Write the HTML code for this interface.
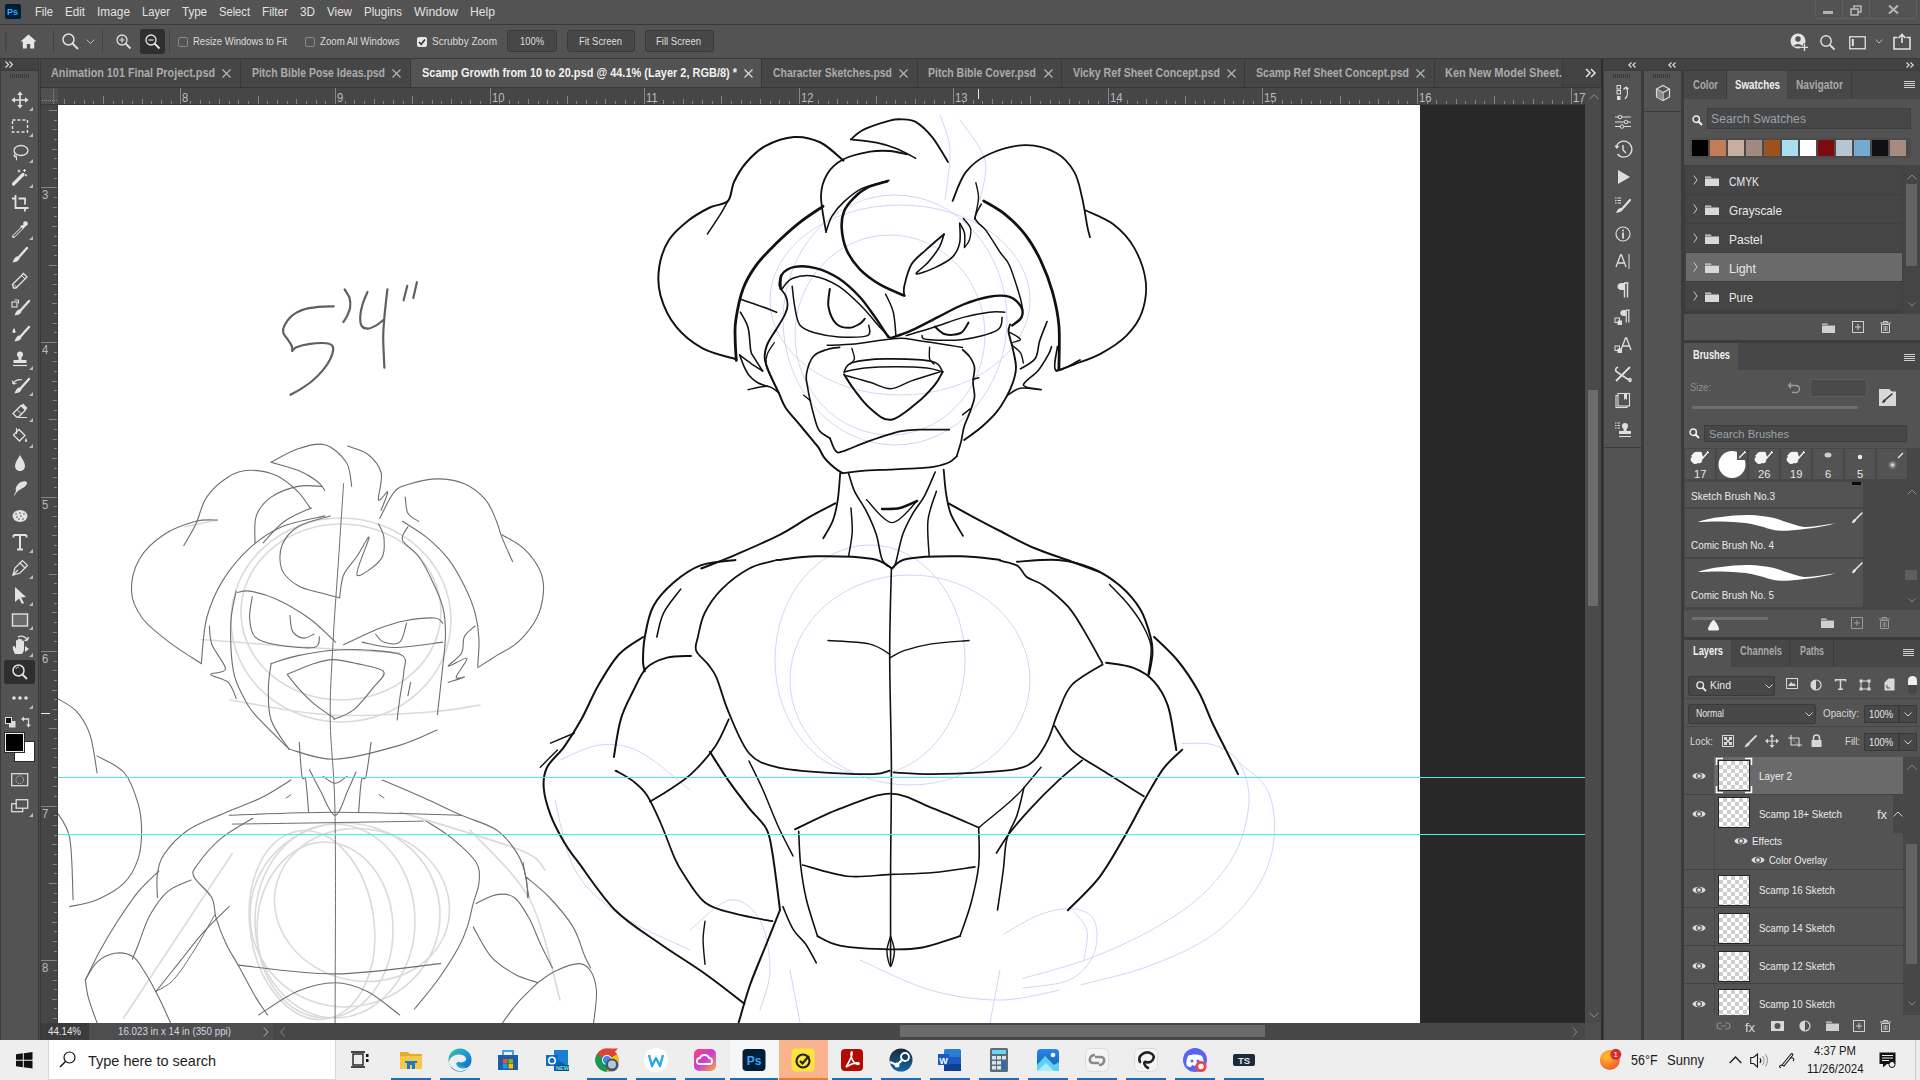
<!DOCTYPE html>
<html><head><meta charset="utf-8">
<style>
*{margin:0;padding:0;box-sizing:border-box}
html,body{width:1920px;height:1080px;overflow:hidden;background:#535353;font-family:"Liberation Sans",sans-serif;font-size:12px;color:#d6d6d6;position:relative}
.a{position:absolute}
.t{position:absolute;white-space:nowrap;line-height:1}
svg{position:absolute;overflow:visible}
</style></head><body>
<div class="a" style="left:0px;top:0px;width:1920px;height:24px;background:#535353;"></div>
<div class="a" style="left:0px;top:24px;width:1920px;height:1px;background:#3a3a3a;"></div>
<div class="a" style="left:5px;top:4px;width:16px;height:15px;background:#001e36;border-radius:2px"></div>
<div class="a" style="left:1815px;top:-4px;width:102px;height:23px;background:transparent;border:1px solid #616161;border-radius:3px"></div>
<div class="a" style="left:1842px;top:0px;width:1px;height:18px;background:#616161;"></div>
<div class="a" style="left:1869px;top:0px;width:1px;height:18px;background:#616161;"></div>
<div class="a" style="left:1823px;top:11px;width:10px;height:3px;background:#b4b4b4;"></div>
<svg style="left:1850px;top:5px" width="12" height="11"><rect x="1" y="4" width="7" height="6" fill="none" stroke="#b4b4b4" stroke-width="1.6"/><path d="M4 4V1h7v6H8" fill="none" stroke="#b4b4b4" stroke-width="1.6"/></svg>
<svg style="left:1888px;top:5px" width="11" height="9"><path d="M1 0.5L10 8.5M10 0.5L1 8.5" stroke="#b4b4b4" stroke-width="2.2"/></svg>
<div class="a" style="left:0px;top:25px;width:1920px;height:33px;background:#535353;"></div>
<div class="a" style="left:0px;top:58px;width:1920px;height:1px;background:#383838;"></div>
<div class="a" style="left:5px;top:32px;width:2px;height:19px;background:repeating-linear-gradient(#3b3b3b 0 1px,transparent 1px 2px);"></div>
<svg style="left:20px;top:34px" width="17" height="15"><path d="M8.5 0.5L0.5 7.5H2.8V14.5H6.8V10H10.2V14.5H14.2V7.5H16.5Z" fill="#e6e6e6"/></svg>
<div class="a" style="left:53px;top:30px;width:1px;height:23px;background:#434343;"></div>
<svg style="left:62px;top:33px" width="18" height="17"><circle cx="6.5" cy="6.5" r="5.5" fill="none" stroke="#e0e0e0" stroke-width="1.5"/><path d="M10.5 10.5L16 16" stroke="#e0e0e0" stroke-width="2"/></svg>
<svg style="left:86px;top:39px" width="9" height="6"><path d="M0.5 0.5L4.5 4.5L8.5 0.5" fill="none" stroke="#c0c0c0" stroke-width="1"/></svg>
<div class="a" style="left:102px;top:30px;width:1px;height:23px;background:#434343;"></div>
<svg style="left:116px;top:34px" width="16" height="16"><circle cx="6" cy="6" r="5" fill="none" stroke="#e0e0e0" stroke-width="1.3"/><path d="M3.5 6H8.5M6 3.5V8.5" stroke="#e0e0e0" stroke-width="1.2"/><path d="M9.5 9.5L14.5 14.5" stroke="#e0e0e0" stroke-width="1.8"/></svg>
<div class="a" style="left:140px;top:29px;width:25px;height:25px;background:#2f2f2f;border-radius:3px"></div>
<svg style="left:145px;top:34px" width="16" height="16"><circle cx="6" cy="6" r="5" fill="none" stroke="#e6e6e6" stroke-width="1.3"/><path d="M3.5 6H8.5" stroke="#e6e6e6" stroke-width="1.2"/><path d="M9.5 9.5L14.5 14.5" stroke="#e6e6e6" stroke-width="1.8"/></svg>
<div class="a" style="left:169px;top:30px;width:1px;height:23px;background:#434343;"></div>
<div class="a" style="left:178px;top:37px;width:10px;height:10px;background:transparent;border:1px solid #8a8a8a;border-radius:2px"></div>
<div class="a" style="left:305px;top:37px;width:10px;height:10px;background:transparent;border:1px solid #8a8a8a;border-radius:2px"></div>
<div class="a" style="left:417px;top:37px;width:10px;height:10px;background:#e6e6e6;border-radius:2px"></div>
<svg style="left:418px;top:38px" width="8" height="8"><path d="M1 4L3.2 6.3L7 1.5" fill="none" stroke="#333" stroke-width="1.6"/></svg>
<div class="a" style="left:507px;top:30px;width:50px;height:22px;background:#474747;border:1px solid #393939;border-radius:3px"></div>
<div class="a" style="left:567px;top:30px;width:68px;height:22px;background:#474747;border:1px solid #393939;border-radius:3px"></div>
<div class="a" style="left:645px;top:30px;width:69px;height:22px;background:#474747;border:1px solid #393939;border-radius:3px"></div>
<svg style="left:1790px;top:33px" width="20" height="19"><circle cx="8" cy="8" r="7.5" fill="#e2e2e2"/><circle cx="8" cy="6" r="2.7" fill="#535353"/><path d="M3.5 13.5C4.5 10 11.5 10 12.5 13.5" fill="#535353"/><path d="M14.5 10.5V18M10.8 14.3H18.2" stroke="#535353" stroke-width="3"/><path d="M14.5 11V18M11 14.3H18" stroke="#e2e2e2" stroke-width="1.3"/></svg>
<svg style="left:1820px;top:35px" width="16" height="16"><circle cx="6" cy="6" r="5.2" fill="none" stroke="#e2e2e2" stroke-width="1.4"/><path d="M9.8 9.8L14.5 14.5" stroke="#e2e2e2" stroke-width="1.8"/></svg>
<svg style="left:1849px;top:36px" width="17" height="14"><rect x="0.75" y="0.75" width="15.5" height="12" fill="none" stroke="#e2e2e2" stroke-width="1.3"/><rect x="2.8" y="3" width="2" height="7" fill="#e2e2e2"/></svg>
<svg style="left:1875px;top:39px" width="8" height="5"><path d="M0.5 0.5L4 4L7.5 0.5" fill="none" stroke="#b8b8b8" stroke-width="1"/></svg>
<svg style="left:1893px;top:33px" width="18" height="17"><path d="M4.5 4.5H1V16H17V4.5H13.5" fill="none" stroke="#e2e2e2" stroke-width="1.6"/><path d="M9 10V1.5M5.5 5L9 1.5L12.5 5" fill="none" stroke="#e2e2e2" stroke-width="1.6"/></svg>
<div class="a" style="left:0px;top:59px;width:1603px;height:29px;background:#424242;"></div>
<div class="a" style="left:41px;top:87px;width:1562px;height:1px;background:#363636;"></div>
<div class="a" style="left:41px;top:59px;width:200px;height:28px;background:#464646;"></div>
<div class="a" style="left:240px;top:59px;width:1px;height:28px;background:#393939;"></div>
<svg style="left:222px;top:69px" width="9" height="9"><path d="M0.5 0.5L8.5 8.5M8.5 0.5L0.5 8.5" stroke="#b8b8b8" stroke-width="1.1"/></svg>
<div class="a" style="left:241px;top:59px;width:170px;height:28px;background:#464646;"></div>
<div class="a" style="left:410px;top:59px;width:1px;height:28px;background:#393939;"></div>
<svg style="left:392px;top:69px" width="9" height="9"><path d="M0.5 0.5L8.5 8.5M8.5 0.5L0.5 8.5" stroke="#b8b8b8" stroke-width="1.1"/></svg>
<div class="a" style="left:411px;top:59px;width:351px;height:28px;background:#535353;"></div>
<div class="a" style="left:761px;top:59px;width:1px;height:28px;background:#393939;"></div>
<svg style="left:744px;top:69px" width="9" height="9"><path d="M0.5 0.5L8.5 8.5M8.5 0.5L0.5 8.5" stroke="#e0e0e0" stroke-width="1.1"/></svg>
<div class="a" style="left:762px;top:59px;width:156px;height:28px;background:#464646;"></div>
<div class="a" style="left:917px;top:59px;width:1px;height:28px;background:#393939;"></div>
<svg style="left:899px;top:69px" width="9" height="9"><path d="M0.5 0.5L8.5 8.5M8.5 0.5L0.5 8.5" stroke="#b8b8b8" stroke-width="1.1"/></svg>
<div class="a" style="left:918px;top:59px;width:144px;height:28px;background:#464646;"></div>
<div class="a" style="left:1061px;top:59px;width:1px;height:28px;background:#393939;"></div>
<svg style="left:1044px;top:69px" width="9" height="9"><path d="M0.5 0.5L8.5 8.5M8.5 0.5L0.5 8.5" stroke="#b8b8b8" stroke-width="1.1"/></svg>
<div class="a" style="left:1062px;top:59px;width:183px;height:28px;background:#464646;"></div>
<div class="a" style="left:1244px;top:59px;width:1px;height:28px;background:#393939;"></div>
<svg style="left:1227px;top:69px" width="9" height="9"><path d="M0.5 0.5L8.5 8.5M8.5 0.5L0.5 8.5" stroke="#b8b8b8" stroke-width="1.1"/></svg>
<div class="a" style="left:1245px;top:59px;width:190px;height:28px;background:#464646;"></div>
<div class="a" style="left:1434px;top:59px;width:1px;height:28px;background:#393939;"></div>
<svg style="left:1416px;top:69px" width="9" height="9"><path d="M0.5 0.5L8.5 8.5M8.5 0.5L0.5 8.5" stroke="#b8b8b8" stroke-width="1.1"/></svg>
<div class="a" style="left:1435px;top:59px;width:128px;height:28px;background:#464646;"></div>
<div class="a" style="left:1562px;top:59px;width:1px;height:28px;background:#393939;"></div>
<svg style="left:1585px;top:68px" width="12" height="10"><path d="M1 1L5 5L1 9M6 1L10 5L6 9" fill="none" stroke="#e6e6e6" stroke-width="1.5"/></svg>
<div class="a" style="left:0px;top:59px;width:38px;height:11px;background:#424242;"></div>
<svg style="left:5px;top:61px" width="9" height="7"><path d="M0.5 0.5L3.5 3.5L0.5 6.5M4.5 0.5L7.5 3.5L4.5 6.5" fill="none" stroke="#e0e0e0" stroke-width="1.1"/></svg>
<div class="a" style="left:0px;top:70px;width:38px;height:970px;background:#535353;"></div>
<div class="a" style="left:0px;top:59px;width:1px;height:981px;background:#3a3a3a;"></div>
<div class="a" style="left:38px;top:59px;width:1px;height:981px;background:#393939;"></div>
<div class="a" style="left:39px;top:59px;width:1px;height:981px;background:#4a4a4a;"></div>
<div class="a" style="left:40px;top:59px;width:1px;height:981px;background:#393939;"></div>
<div class="a" style="left:0px;top:70px;width:38px;height:1px;background:#3a3a3a;"></div>
<div class="a" style="left:10px;top:74px;width:19px;height:4px;background:repeating-linear-gradient(90deg,#383838 0 1px,transparent 1px 2px);"></div>
<div class="a" style="left:41px;top:88px;width:1560px;height:17px;background:#464646;"></div>
<div class="a" style="left:41px;top:105px;width:17px;height:918px;background:#464646;"></div>
<div class="a" style="left:41px;top:88px;width:17px;height:17px;background:#505050;"></div>
<div class="a" style="left:41.5px;top:100px;width:16px;height:1px;background:repeating-linear-gradient(90deg,#8a8a8a 0 1px,transparent 1px 2px);"></div>
<div class="a" style="left:53px;top:89px;width:1px;height:15px;background:repeating-linear-gradient(#8a8a8a 0 1px,transparent 1px 2px);"></div>
<div class="a" style="left:41px;top:104px;width:1560px;height:1px;background:#3a3a3a;"></div>
<div class="a" style="left:57px;top:105px;width:1px;height:918px;background:#3a3a3a;"></div>
<div class="a" style="left:64px;top:99px;width:1px;height:5px;background:#858585"></div>
<div class="a" style="left:74px;top:101px;width:1px;height:3px;background:#858585"></div>
<div class="a" style="left:84px;top:100px;width:1px;height:4px;background:#858585"></div>
<div class="a" style="left:93px;top:101px;width:1px;height:3px;background:#858585"></div>
<div class="a" style="left:103px;top:96px;width:1px;height:8px;background:#858585"></div>
<div class="a" style="left:113px;top:101px;width:1px;height:3px;background:#858585"></div>
<div class="a" style="left:122px;top:100px;width:1px;height:4px;background:#858585"></div>
<div class="a" style="left:132px;top:101px;width:1px;height:3px;background:#858585"></div>
<div class="a" style="left:142px;top:99px;width:1px;height:5px;background:#858585"></div>
<div class="a" style="left:151px;top:101px;width:1px;height:3px;background:#858585"></div>
<div class="a" style="left:161px;top:100px;width:1px;height:4px;background:#858585"></div>
<div class="a" style="left:171px;top:101px;width:1px;height:3px;background:#858585"></div>
<div class="a" style="left:180px;top:88px;width:1px;height:16px;background:#858585"></div>
<div class="a" style="left:190px;top:101px;width:1px;height:3px;background:#858585"></div>
<div class="a" style="left:200px;top:100px;width:1px;height:4px;background:#858585"></div>
<div class="a" style="left:209px;top:101px;width:1px;height:3px;background:#858585"></div>
<div class="a" style="left:219px;top:99px;width:1px;height:5px;background:#858585"></div>
<div class="a" style="left:229px;top:101px;width:1px;height:3px;background:#858585"></div>
<div class="a" style="left:238px;top:100px;width:1px;height:4px;background:#858585"></div>
<div class="a" style="left:248px;top:101px;width:1px;height:3px;background:#858585"></div>
<div class="a" style="left:258px;top:96px;width:1px;height:8px;background:#858585"></div>
<div class="a" style="left:267px;top:101px;width:1px;height:3px;background:#858585"></div>
<div class="a" style="left:277px;top:100px;width:1px;height:4px;background:#858585"></div>
<div class="a" style="left:287px;top:101px;width:1px;height:3px;background:#858585"></div>
<div class="a" style="left:296px;top:99px;width:1px;height:5px;background:#858585"></div>
<div class="a" style="left:306px;top:101px;width:1px;height:3px;background:#858585"></div>
<div class="a" style="left:316px;top:100px;width:1px;height:4px;background:#858585"></div>
<div class="a" style="left:325px;top:101px;width:1px;height:3px;background:#858585"></div>
<div class="a" style="left:335px;top:88px;width:1px;height:16px;background:#858585"></div>
<div class="a" style="left:345px;top:101px;width:1px;height:3px;background:#858585"></div>
<div class="a" style="left:354px;top:100px;width:1px;height:4px;background:#858585"></div>
<div class="a" style="left:364px;top:101px;width:1px;height:3px;background:#858585"></div>
<div class="a" style="left:374px;top:99px;width:1px;height:5px;background:#858585"></div>
<div class="a" style="left:383px;top:101px;width:1px;height:3px;background:#858585"></div>
<div class="a" style="left:393px;top:100px;width:1px;height:4px;background:#858585"></div>
<div class="a" style="left:403px;top:101px;width:1px;height:3px;background:#858585"></div>
<div class="a" style="left:412px;top:96px;width:1px;height:8px;background:#858585"></div>
<div class="a" style="left:422px;top:101px;width:1px;height:3px;background:#858585"></div>
<div class="a" style="left:432px;top:100px;width:1px;height:4px;background:#858585"></div>
<div class="a" style="left:441px;top:101px;width:1px;height:3px;background:#858585"></div>
<div class="a" style="left:451px;top:99px;width:1px;height:5px;background:#858585"></div>
<div class="a" style="left:461px;top:101px;width:1px;height:3px;background:#858585"></div>
<div class="a" style="left:470px;top:100px;width:1px;height:4px;background:#858585"></div>
<div class="a" style="left:480px;top:101px;width:1px;height:3px;background:#858585"></div>
<div class="a" style="left:490px;top:88px;width:1px;height:16px;background:#858585"></div>
<div class="a" style="left:499px;top:101px;width:1px;height:3px;background:#858585"></div>
<div class="a" style="left:509px;top:100px;width:1px;height:4px;background:#858585"></div>
<div class="a" style="left:518px;top:101px;width:1px;height:3px;background:#858585"></div>
<div class="a" style="left:528px;top:99px;width:1px;height:5px;background:#858585"></div>
<div class="a" style="left:538px;top:101px;width:1px;height:3px;background:#858585"></div>
<div class="a" style="left:547px;top:100px;width:1px;height:4px;background:#858585"></div>
<div class="a" style="left:557px;top:101px;width:1px;height:3px;background:#858585"></div>
<div class="a" style="left:567px;top:96px;width:1px;height:8px;background:#858585"></div>
<div class="a" style="left:576px;top:101px;width:1px;height:3px;background:#858585"></div>
<div class="a" style="left:586px;top:100px;width:1px;height:4px;background:#858585"></div>
<div class="a" style="left:596px;top:101px;width:1px;height:3px;background:#858585"></div>
<div class="a" style="left:605px;top:99px;width:1px;height:5px;background:#858585"></div>
<div class="a" style="left:615px;top:101px;width:1px;height:3px;background:#858585"></div>
<div class="a" style="left:625px;top:100px;width:1px;height:4px;background:#858585"></div>
<div class="a" style="left:634px;top:101px;width:1px;height:3px;background:#858585"></div>
<div class="a" style="left:644px;top:88px;width:1px;height:16px;background:#858585"></div>
<div class="a" style="left:654px;top:101px;width:1px;height:3px;background:#858585"></div>
<div class="a" style="left:663px;top:100px;width:1px;height:4px;background:#858585"></div>
<div class="a" style="left:673px;top:101px;width:1px;height:3px;background:#858585"></div>
<div class="a" style="left:683px;top:99px;width:1px;height:5px;background:#858585"></div>
<div class="a" style="left:692px;top:101px;width:1px;height:3px;background:#858585"></div>
<div class="a" style="left:702px;top:100px;width:1px;height:4px;background:#858585"></div>
<div class="a" style="left:712px;top:101px;width:1px;height:3px;background:#858585"></div>
<div class="a" style="left:721px;top:96px;width:1px;height:8px;background:#858585"></div>
<div class="a" style="left:731px;top:101px;width:1px;height:3px;background:#858585"></div>
<div class="a" style="left:741px;top:100px;width:1px;height:4px;background:#858585"></div>
<div class="a" style="left:750px;top:101px;width:1px;height:3px;background:#858585"></div>
<div class="a" style="left:760px;top:99px;width:1px;height:5px;background:#858585"></div>
<div class="a" style="left:770px;top:101px;width:1px;height:3px;background:#858585"></div>
<div class="a" style="left:779px;top:100px;width:1px;height:4px;background:#858585"></div>
<div class="a" style="left:789px;top:101px;width:1px;height:3px;background:#858585"></div>
<div class="a" style="left:799px;top:88px;width:1px;height:16px;background:#858585"></div>
<div class="a" style="left:808px;top:101px;width:1px;height:3px;background:#858585"></div>
<div class="a" style="left:818px;top:100px;width:1px;height:4px;background:#858585"></div>
<div class="a" style="left:828px;top:101px;width:1px;height:3px;background:#858585"></div>
<div class="a" style="left:837px;top:99px;width:1px;height:5px;background:#858585"></div>
<div class="a" style="left:847px;top:101px;width:1px;height:3px;background:#858585"></div>
<div class="a" style="left:857px;top:100px;width:1px;height:4px;background:#858585"></div>
<div class="a" style="left:866px;top:101px;width:1px;height:3px;background:#858585"></div>
<div class="a" style="left:876px;top:96px;width:1px;height:8px;background:#858585"></div>
<div class="a" style="left:886px;top:101px;width:1px;height:3px;background:#858585"></div>
<div class="a" style="left:895px;top:100px;width:1px;height:4px;background:#858585"></div>
<div class="a" style="left:905px;top:101px;width:1px;height:3px;background:#858585"></div>
<div class="a" style="left:915px;top:99px;width:1px;height:5px;background:#858585"></div>
<div class="a" style="left:924px;top:101px;width:1px;height:3px;background:#858585"></div>
<div class="a" style="left:934px;top:100px;width:1px;height:4px;background:#858585"></div>
<div class="a" style="left:944px;top:101px;width:1px;height:3px;background:#858585"></div>
<div class="a" style="left:953px;top:88px;width:1px;height:16px;background:#858585"></div>
<div class="a" style="left:963px;top:101px;width:1px;height:3px;background:#858585"></div>
<div class="a" style="left:973px;top:100px;width:1px;height:4px;background:#858585"></div>
<div class="a" style="left:982px;top:101px;width:1px;height:3px;background:#858585"></div>
<div class="a" style="left:992px;top:99px;width:1px;height:5px;background:#858585"></div>
<div class="a" style="left:1002px;top:101px;width:1px;height:3px;background:#858585"></div>
<div class="a" style="left:1011px;top:100px;width:1px;height:4px;background:#858585"></div>
<div class="a" style="left:1021px;top:101px;width:1px;height:3px;background:#858585"></div>
<div class="a" style="left:1030px;top:96px;width:1px;height:8px;background:#858585"></div>
<div class="a" style="left:1040px;top:101px;width:1px;height:3px;background:#858585"></div>
<div class="a" style="left:1050px;top:100px;width:1px;height:4px;background:#858585"></div>
<div class="a" style="left:1059px;top:101px;width:1px;height:3px;background:#858585"></div>
<div class="a" style="left:1069px;top:99px;width:1px;height:5px;background:#858585"></div>
<div class="a" style="left:1079px;top:101px;width:1px;height:3px;background:#858585"></div>
<div class="a" style="left:1088px;top:100px;width:1px;height:4px;background:#858585"></div>
<div class="a" style="left:1098px;top:101px;width:1px;height:3px;background:#858585"></div>
<div class="a" style="left:1108px;top:88px;width:1px;height:16px;background:#858585"></div>
<div class="a" style="left:1117px;top:101px;width:1px;height:3px;background:#858585"></div>
<div class="a" style="left:1127px;top:100px;width:1px;height:4px;background:#858585"></div>
<div class="a" style="left:1137px;top:101px;width:1px;height:3px;background:#858585"></div>
<div class="a" style="left:1146px;top:99px;width:1px;height:5px;background:#858585"></div>
<div class="a" style="left:1156px;top:101px;width:1px;height:3px;background:#858585"></div>
<div class="a" style="left:1166px;top:100px;width:1px;height:4px;background:#858585"></div>
<div class="a" style="left:1175px;top:101px;width:1px;height:3px;background:#858585"></div>
<div class="a" style="left:1185px;top:96px;width:1px;height:8px;background:#858585"></div>
<div class="a" style="left:1195px;top:101px;width:1px;height:3px;background:#858585"></div>
<div class="a" style="left:1204px;top:100px;width:1px;height:4px;background:#858585"></div>
<div class="a" style="left:1214px;top:101px;width:1px;height:3px;background:#858585"></div>
<div class="a" style="left:1224px;top:99px;width:1px;height:5px;background:#858585"></div>
<div class="a" style="left:1233px;top:101px;width:1px;height:3px;background:#858585"></div>
<div class="a" style="left:1243px;top:100px;width:1px;height:4px;background:#858585"></div>
<div class="a" style="left:1253px;top:101px;width:1px;height:3px;background:#858585"></div>
<div class="a" style="left:1262px;top:88px;width:1px;height:16px;background:#858585"></div>
<div class="a" style="left:1272px;top:101px;width:1px;height:3px;background:#858585"></div>
<div class="a" style="left:1282px;top:100px;width:1px;height:4px;background:#858585"></div>
<div class="a" style="left:1291px;top:101px;width:1px;height:3px;background:#858585"></div>
<div class="a" style="left:1301px;top:99px;width:1px;height:5px;background:#858585"></div>
<div class="a" style="left:1311px;top:101px;width:1px;height:3px;background:#858585"></div>
<div class="a" style="left:1320px;top:100px;width:1px;height:4px;background:#858585"></div>
<div class="a" style="left:1330px;top:101px;width:1px;height:3px;background:#858585"></div>
<div class="a" style="left:1340px;top:96px;width:1px;height:8px;background:#858585"></div>
<div class="a" style="left:1349px;top:101px;width:1px;height:3px;background:#858585"></div>
<div class="a" style="left:1359px;top:100px;width:1px;height:4px;background:#858585"></div>
<div class="a" style="left:1369px;top:101px;width:1px;height:3px;background:#858585"></div>
<div class="a" style="left:1378px;top:99px;width:1px;height:5px;background:#858585"></div>
<div class="a" style="left:1388px;top:101px;width:1px;height:3px;background:#858585"></div>
<div class="a" style="left:1398px;top:100px;width:1px;height:4px;background:#858585"></div>
<div class="a" style="left:1407px;top:101px;width:1px;height:3px;background:#858585"></div>
<div class="a" style="left:1417px;top:88px;width:1px;height:16px;background:#858585"></div>
<div class="a" style="left:1427px;top:101px;width:1px;height:3px;background:#858585"></div>
<div class="a" style="left:1436px;top:100px;width:1px;height:4px;background:#858585"></div>
<div class="a" style="left:1446px;top:101px;width:1px;height:3px;background:#858585"></div>
<div class="a" style="left:1456px;top:99px;width:1px;height:5px;background:#858585"></div>
<div class="a" style="left:1465px;top:101px;width:1px;height:3px;background:#858585"></div>
<div class="a" style="left:1475px;top:100px;width:1px;height:4px;background:#858585"></div>
<div class="a" style="left:1484px;top:101px;width:1px;height:3px;background:#858585"></div>
<div class="a" style="left:1494px;top:96px;width:1px;height:8px;background:#858585"></div>
<div class="a" style="left:1504px;top:101px;width:1px;height:3px;background:#858585"></div>
<div class="a" style="left:1513px;top:100px;width:1px;height:4px;background:#858585"></div>
<div class="a" style="left:1523px;top:101px;width:1px;height:3px;background:#858585"></div>
<div class="a" style="left:1533px;top:99px;width:1px;height:5px;background:#858585"></div>
<div class="a" style="left:1542px;top:101px;width:1px;height:3px;background:#858585"></div>
<div class="a" style="left:1552px;top:100px;width:1px;height:4px;background:#858585"></div>
<div class="a" style="left:1562px;top:101px;width:1px;height:3px;background:#858585"></div>
<div class="a" style="left:1571px;top:88px;width:1px;height:16px;background:#858585"></div>
<div class="a" style="left:1581px;top:101px;width:1px;height:3px;background:#858585"></div>
<div class="a" style="left:49px;top:110px;width:8px;height:1px;background:#858585"></div>
<div class="a" style="left:54px;top:120px;width:3px;height:1px;background:#858585"></div>
<div class="a" style="left:53px;top:129px;width:4px;height:1px;background:#858585"></div>
<div class="a" style="left:54px;top:139px;width:3px;height:1px;background:#858585"></div>
<div class="a" style="left:52px;top:149px;width:5px;height:1px;background:#858585"></div>
<div class="a" style="left:54px;top:158px;width:3px;height:1px;background:#858585"></div>
<div class="a" style="left:53px;top:168px;width:4px;height:1px;background:#858585"></div>
<div class="a" style="left:54px;top:178px;width:3px;height:1px;background:#858585"></div>
<div class="a" style="left:41px;top:187px;width:16px;height:1px;background:#858585"></div>
<div class="a" style="left:54px;top:197px;width:3px;height:1px;background:#858585"></div>
<div class="a" style="left:53px;top:207px;width:4px;height:1px;background:#858585"></div>
<div class="a" style="left:54px;top:216px;width:3px;height:1px;background:#858585"></div>
<div class="a" style="left:52px;top:226px;width:5px;height:1px;background:#858585"></div>
<div class="a" style="left:54px;top:236px;width:3px;height:1px;background:#858585"></div>
<div class="a" style="left:53px;top:245px;width:4px;height:1px;background:#858585"></div>
<div class="a" style="left:54px;top:255px;width:3px;height:1px;background:#858585"></div>
<div class="a" style="left:49px;top:265px;width:8px;height:1px;background:#858585"></div>
<div class="a" style="left:54px;top:274px;width:3px;height:1px;background:#858585"></div>
<div class="a" style="left:53px;top:284px;width:4px;height:1px;background:#858585"></div>
<div class="a" style="left:54px;top:294px;width:3px;height:1px;background:#858585"></div>
<div class="a" style="left:52px;top:303px;width:5px;height:1px;background:#858585"></div>
<div class="a" style="left:54px;top:313px;width:3px;height:1px;background:#858585"></div>
<div class="a" style="left:53px;top:323px;width:4px;height:1px;background:#858585"></div>
<div class="a" style="left:54px;top:332px;width:3px;height:1px;background:#858585"></div>
<div class="a" style="left:41px;top:342px;width:16px;height:1px;background:#858585"></div>
<div class="a" style="left:54px;top:352px;width:3px;height:1px;background:#858585"></div>
<div class="a" style="left:53px;top:361px;width:4px;height:1px;background:#858585"></div>
<div class="a" style="left:54px;top:371px;width:3px;height:1px;background:#858585"></div>
<div class="a" style="left:52px;top:381px;width:5px;height:1px;background:#858585"></div>
<div class="a" style="left:54px;top:390px;width:3px;height:1px;background:#858585"></div>
<div class="a" style="left:53px;top:400px;width:4px;height:1px;background:#858585"></div>
<div class="a" style="left:54px;top:410px;width:3px;height:1px;background:#858585"></div>
<div class="a" style="left:49px;top:419px;width:8px;height:1px;background:#858585"></div>
<div class="a" style="left:54px;top:429px;width:3px;height:1px;background:#858585"></div>
<div class="a" style="left:53px;top:439px;width:4px;height:1px;background:#858585"></div>
<div class="a" style="left:54px;top:448px;width:3px;height:1px;background:#858585"></div>
<div class="a" style="left:52px;top:458px;width:5px;height:1px;background:#858585"></div>
<div class="a" style="left:54px;top:468px;width:3px;height:1px;background:#858585"></div>
<div class="a" style="left:53px;top:477px;width:4px;height:1px;background:#858585"></div>
<div class="a" style="left:54px;top:487px;width:3px;height:1px;background:#858585"></div>
<div class="a" style="left:41px;top:497px;width:16px;height:1px;background:#858585"></div>
<div class="a" style="left:54px;top:506px;width:3px;height:1px;background:#858585"></div>
<div class="a" style="left:53px;top:516px;width:4px;height:1px;background:#858585"></div>
<div class="a" style="left:54px;top:526px;width:3px;height:1px;background:#858585"></div>
<div class="a" style="left:52px;top:535px;width:5px;height:1px;background:#858585"></div>
<div class="a" style="left:54px;top:545px;width:3px;height:1px;background:#858585"></div>
<div class="a" style="left:53px;top:554px;width:4px;height:1px;background:#858585"></div>
<div class="a" style="left:54px;top:564px;width:3px;height:1px;background:#858585"></div>
<div class="a" style="left:49px;top:574px;width:8px;height:1px;background:#858585"></div>
<div class="a" style="left:54px;top:583px;width:3px;height:1px;background:#858585"></div>
<div class="a" style="left:53px;top:593px;width:4px;height:1px;background:#858585"></div>
<div class="a" style="left:54px;top:603px;width:3px;height:1px;background:#858585"></div>
<div class="a" style="left:52px;top:612px;width:5px;height:1px;background:#858585"></div>
<div class="a" style="left:54px;top:622px;width:3px;height:1px;background:#858585"></div>
<div class="a" style="left:53px;top:632px;width:4px;height:1px;background:#858585"></div>
<div class="a" style="left:54px;top:641px;width:3px;height:1px;background:#858585"></div>
<div class="a" style="left:41px;top:651px;width:16px;height:1px;background:#858585"></div>
<div class="a" style="left:54px;top:661px;width:3px;height:1px;background:#858585"></div>
<div class="a" style="left:53px;top:670px;width:4px;height:1px;background:#858585"></div>
<div class="a" style="left:54px;top:680px;width:3px;height:1px;background:#858585"></div>
<div class="a" style="left:52px;top:690px;width:5px;height:1px;background:#858585"></div>
<div class="a" style="left:54px;top:699px;width:3px;height:1px;background:#858585"></div>
<div class="a" style="left:53px;top:709px;width:4px;height:1px;background:#858585"></div>
<div class="a" style="left:54px;top:719px;width:3px;height:1px;background:#858585"></div>
<div class="a" style="left:49px;top:728px;width:8px;height:1px;background:#858585"></div>
<div class="a" style="left:54px;top:738px;width:3px;height:1px;background:#858585"></div>
<div class="a" style="left:53px;top:748px;width:4px;height:1px;background:#858585"></div>
<div class="a" style="left:54px;top:757px;width:3px;height:1px;background:#858585"></div>
<div class="a" style="left:52px;top:767px;width:5px;height:1px;background:#858585"></div>
<div class="a" style="left:54px;top:777px;width:3px;height:1px;background:#858585"></div>
<div class="a" style="left:53px;top:786px;width:4px;height:1px;background:#858585"></div>
<div class="a" style="left:54px;top:796px;width:3px;height:1px;background:#858585"></div>
<div class="a" style="left:41px;top:806px;width:16px;height:1px;background:#858585"></div>
<div class="a" style="left:54px;top:815px;width:3px;height:1px;background:#858585"></div>
<div class="a" style="left:53px;top:825px;width:4px;height:1px;background:#858585"></div>
<div class="a" style="left:54px;top:835px;width:3px;height:1px;background:#858585"></div>
<div class="a" style="left:52px;top:844px;width:5px;height:1px;background:#858585"></div>
<div class="a" style="left:54px;top:854px;width:3px;height:1px;background:#858585"></div>
<div class="a" style="left:53px;top:864px;width:4px;height:1px;background:#858585"></div>
<div class="a" style="left:54px;top:873px;width:3px;height:1px;background:#858585"></div>
<div class="a" style="left:49px;top:883px;width:8px;height:1px;background:#858585"></div>
<div class="a" style="left:54px;top:893px;width:3px;height:1px;background:#858585"></div>
<div class="a" style="left:53px;top:902px;width:4px;height:1px;background:#858585"></div>
<div class="a" style="left:54px;top:912px;width:3px;height:1px;background:#858585"></div>
<div class="a" style="left:52px;top:922px;width:5px;height:1px;background:#858585"></div>
<div class="a" style="left:54px;top:931px;width:3px;height:1px;background:#858585"></div>
<div class="a" style="left:53px;top:941px;width:4px;height:1px;background:#858585"></div>
<div class="a" style="left:54px;top:951px;width:3px;height:1px;background:#858585"></div>
<div class="a" style="left:41px;top:960px;width:16px;height:1px;background:#858585"></div>
<div class="a" style="left:54px;top:970px;width:3px;height:1px;background:#858585"></div>
<div class="a" style="left:53px;top:980px;width:4px;height:1px;background:#858585"></div>
<div class="a" style="left:54px;top:989px;width:3px;height:1px;background:#858585"></div>
<div class="a" style="left:52px;top:999px;width:5px;height:1px;background:#858585"></div>
<div class="a" style="left:54px;top:1008px;width:3px;height:1px;background:#858585"></div>
<div class="a" style="left:53px;top:1018px;width:4px;height:1px;background:#858585"></div>
<div class="a" style="left:978px;top:89px;width:1px;height:10px;background:#e8e8e8;"></div>
<div class="a" style="left:41px;top:713px;width:9px;height:1px;background:#e8e8e8;"></div>
<div class="a" style="left:58px;top:105px;width:1362px;height:918px;background:#ffffff;"></div>
<div class="a" style="left:1420px;top:105px;width:165px;height:918px;background:#282828;"></div>
<div class="a" style="left:1585px;top:88px;width:16px;height:951px;background:#4a4a4a;"></div>
<svg style="left:1589px;top:94px" width="10" height="6"><path d="M0.5 5L5 0.8L9.5 5" fill="none" stroke="#8c8c8c" stroke-width="1"/></svg>
<svg style="left:1589px;top:1012px" width="10" height="6"><path d="M0.5 0.8L5 5L9.5 0.8" fill="none" stroke="#8c8c8c" stroke-width="1"/></svg>
<div class="a" style="left:1588px;top:390px;width:10px;height:216px;background:#6b6b6b;"></div>
<div class="a" style="left:41px;top:1023px;width:1560px;height:17px;background:#474747;"></div>
<div class="a" style="left:41px;top:1023px;width:48px;height:17px;background:#3c3c3c;"></div>
<div class="a" style="left:89px;top:1023px;width:184px;height:17px;background:#4e4e4e;"></div>
<svg style="left:263px;top:1027px" width="6" height="10"><path d="M0.8 0.5L4.8 5L0.8 9.5" fill="none" stroke="#b0b0b0" stroke-width="1"/></svg>
<svg style="left:280px;top:1027px" width="6" height="10"><path d="M4.8 0.5L0.8 5L4.8 9.5" fill="none" stroke="#8a8a8a" stroke-width="1"/></svg>
<div class="a" style="left:900px;top:1025px;width:365px;height:12px;background:#6b6b6b;"></div>
<svg style="left:1572px;top:1027px" width="6" height="10"><path d="M0.8 0.5L4.8 5L0.8 9.5" fill="none" stroke="#8a8a8a" stroke-width="1"/></svg>
<div class="a" style="left:1585px;top:1023px;width:16px;height:17px;background:#4e4e4e;"></div>
<div class="a" style="left:1601px;top:59px;width:2px;height:981px;background:#2e2e2e;"></div>
<svg style="left:9.5px;top:90.0px" width="20" height="20" viewBox="-10 -10 20 20"><path d="M0-7.5V7.5M-7.5 0H7.5" stroke="#e2e2e2" stroke-width="1.6"/><path d="M0-8.5L-2.8-5H2.8ZM0 8.5L-2.8 5H2.8ZM-8.5 0L-5-2.8V2.8ZM8.5 0L5-2.8V2.8Z" fill="#e2e2e2"/></svg>
<svg style="left:28.5px;top:107px" width="4" height="4"><path d="M4 0V4H0Z" fill="#bdbdbd"/></svg>
<svg style="left:9.5px;top:116.0px" width="20" height="20" viewBox="-10 -10 20 20"><rect x="-7.5" y="-6" width="15" height="12" stroke="#e2e2e2" fill="none" stroke-width="1.4" stroke-dasharray="3 2"/></svg>
<svg style="left:28.5px;top:133px" width="4" height="4"><path d="M4 0V4H0Z" fill="#bdbdbd"/></svg>
<svg style="left:9.5px;top:142.0px" width="20" height="20" viewBox="-10 -10 20 20"><ellipse cx="1" cy="-1.5" rx="7" ry="5" stroke="#e2e2e2" fill="none" stroke-width="1.3"/><path d="M-5 2C-7 4-5 6-4 4C-3 6-4 8-3 8" stroke="#e2e2e2" fill="none" stroke-width="1.2"/></svg>
<svg style="left:28.5px;top:159px" width="4" height="4"><path d="M4 0V4H0Z" fill="#bdbdbd"/></svg>
<svg style="left:9.5px;top:167.0px" width="20" height="20" viewBox="-10 -10 20 20"><path d="M-6.5 7L3-2.5" stroke="#e2e2e2" stroke-width="3.2" stroke-linecap="round"/><path d="M-1-7.5V-4.5M-2.5-6H0.5M4.5-8V-5M3-6.5H6M6-3V-0.5M4.8-1.8H7.2" stroke="#e2e2e2" stroke-width="1"/></svg>
<svg style="left:28.5px;top:184px" width="4" height="4"><path d="M4 0V4H0Z" fill="#bdbdbd"/></svg>
<svg style="left:9.5px;top:193.0px" width="20" height="20" viewBox="-10 -10 20 20"><path d="M-8-4.5H-4.5V5H5V8.5M-4.5-8V-4.5M-1.5-4.5H5V1.5M5 5H8.5" stroke="#e2e2e2" fill="none" stroke-width="1.8"/></svg>
<svg style="left:9.5px;top:219.0px" width="20" height="20" viewBox="-10 -10 20 20"><path d="M-6.5 7.5L2-1" stroke="#e2e2e2" stroke-width="3" stroke-linecap="round"/><path d="M-6 7L2-1" stroke="#535353" stroke-width="1.2" stroke-linecap="round"/><path d="M0-3L3 0L5-2L7.5-4.5L5.5-6.5L3-4Z" fill="#e2e2e2"/><circle cx="5.5" cy="-5.5" r="2.3" fill="#e2e2e2"/></svg>
<svg style="left:28.5px;top:236px" width="4" height="4"><path d="M4 0V4H0Z" fill="#bdbdbd"/></svg>
<svg style="left:9.5px;top:245.0px" width="20" height="20" viewBox="-10 -10 20 20"><path d="M-1.5 2.5L7-7" stroke="#e2e2e2" stroke-width="2.4" stroke-linecap="round"/><path d="M-2.5 1.5C-5 1.5-6 4-7.5 7.5C-4 7-1 6-0.5 3.5Z" fill="#e2e2e2"/></svg>
<svg style="left:9.5px;top:271.0px" width="20" height="20" viewBox="-10 -10 20 20"><path d="M-6.5 7L-7.5 3.5L3.5-7.5L7-4L-4 7Z" stroke="#e2e2e2" fill="none" stroke-width="1.3"/><path d="M1.5-5.5L5-2M-6 3.5L-3.5 6" stroke="#e2e2e2" fill="none" stroke-width="1"/></svg>
<svg style="left:9.5px;top:297.0px" width="20" height="20" viewBox="-10 -10 20 20"><g transform="translate(2 1)"><path d="M-1.5 2.5L7-7" stroke="#e2e2e2" stroke-width="2.4" stroke-linecap="round"/><path d="M-2.5 1.5C-5 1.5-6 4-7.5 7.5C-4 7-1 6-0.5 3.5Z" fill="#e2e2e2"/></g><rect x="-8" y="-5" width="5" height="5" stroke="#e2e2e2" fill="none" stroke-width="1.1"/><path d="M-5.5-7H-1.5V-3.5" stroke="#e2e2e2" fill="none" stroke-width="1"/></svg>
<svg style="left:9.5px;top:323.0px" width="20" height="20" viewBox="-10 -10 20 20"><g transform="translate(2 1)"><path d="M-1.5 2.5L7-7" stroke="#e2e2e2" stroke-width="2.4" stroke-linecap="round"/><path d="M-2.5 1.5C-5 1.5-6 4-7.5 7.5C-4 7-1 6-0.5 3.5Z" fill="#e2e2e2"/></g><path d="M-6-5C-8-2-8 0-6 0C-4 0-4-2-6-5Z" fill="#e2e2e2"/></svg>
<svg style="left:9.5px;top:349.0px" width="20" height="20" viewBox="-10 -10 20 20"><circle cx="0" cy="-4.5" r="3" fill="#e2e2e2"/><path d="M-1.5-2V1H-6.5V4H6.5V1H1.5V-2Z" fill="#e2e2e2"/><path d="M-7 6.5H7" stroke="#e2e2e2" stroke-width="1.2"/></svg>
<svg style="left:28.5px;top:366px" width="4" height="4"><path d="M4 0V4H0Z" fill="#bdbdbd"/></svg>
<svg style="left:9.5px;top:375.0px" width="20" height="20" viewBox="-10 -10 20 20"><g transform="translate(2 1)"><path d="M-1.5 2.5L7-7" stroke="#e2e2e2" stroke-width="2.4" stroke-linecap="round"/><path d="M-2.5 1.5C-5 1.5-6 4-7.5 7.5C-4 7-1 6-0.5 3.5Z" fill="#e2e2e2"/></g><path d="M-7-1C-5-5-1-6 2-5M-7-1L-7.5-4.5M-7-1L-3.5-1.5" stroke="#e2e2e2" fill="none" stroke-width="1.2"/></svg>
<svg style="left:28.5px;top:392px" width="4" height="4"><path d="M4 0V4H0Z" fill="#bdbdbd"/></svg>
<svg style="left:9.5px;top:401.0px" width="20" height="20" viewBox="-10 -10 20 20"><path d="M-7 2.5L1-5.5L5.5-1L-1.5 6H-3.5Z" stroke="#e2e2e2" fill="none" stroke-width="1.3"/><path d="M-3-1.5L1.5 3" stroke="#e2e2e2" fill="none"/><path d="M1-5.5L3-7.5L7.5-3L5.5-1Z" fill="#e2e2e2"/><path d="M-1 6.5H7" stroke="#e2e2e2" fill="none" stroke-width="1"/></svg>
<svg style="left:28.5px;top:418px" width="4" height="4"><path d="M4 0V4H0Z" fill="#bdbdbd"/></svg>
<svg style="left:9.5px;top:427.0px" width="20" height="20" viewBox="-10 -10 20 20"><path d="M-6.5-2L-1-7.5L5-1.5L-0.5 4Z" stroke="#e2e2e2" fill="none" stroke-width="1.3"/><path d="M-3.5-9V-3" stroke="#e2e2e2" fill="none" stroke-width="1.2"/><path d="M6 1C4.5 3.5 4.5 5 6 5C7.5 5 7.5 3.5 6 1Z" fill="#e2e2e2"/></svg>
<svg style="left:28.5px;top:444px" width="4" height="4"><path d="M4 0V4H0Z" fill="#bdbdbd"/></svg>
<svg style="left:9.5px;top:453.0px" width="20" height="20" viewBox="-10 -10 20 20"><path d="M0-8C-3-3-5 0-5 3C-5 6-2.5 8 0 8C2.5 8 5 6 5 3C5 0 3-3 0-8Z" fill="#e2e2e2"/></svg>
<svg style="left:9.5px;top:479.0px" width="20" height="20" viewBox="-10 -10 20 20"><path d="M-6 8C-4 3-1 1 1 0C5-2 7-4 7-6C7-8 4-8.5 1-7C-3-5-5-1-4 2C-5 4-6 6-6 8Z" fill="#e2e2e2"/></svg>
<svg style="left:9.5px;top:506.0px" width="20" height="20" viewBox="-10 -10 20 20"><ellipse cx="0" cy="0" rx="7.5" ry="6" fill="#e2e2e2"/><path d="M-5-2H-3M-1-3H1M3-2H5M-4 1H-2M0 0H2M-2 3H0M2 3H4" stroke="#535353" stroke-width="0.9"/></svg>
<svg style="left:9.5px;top:532.0px" width="20" height="20" viewBox="-10 -10 20 20"><path d="M-6.5-7H6.5M0-7V7.5M-3 7.5H3M-6.5-7V-4.5M6.5-7V-4.5" stroke="#e2e2e2" fill="none" stroke-width="2"/></svg>
<svg style="left:28.5px;top:549px" width="4" height="4"><path d="M4 0V4H0Z" fill="#bdbdbd"/></svg>
<svg style="left:9.5px;top:558.0px" width="20" height="20" viewBox="-10 -10 20 20"><path d="M-7 7L-5 0L0-5L5 0L0 5Z" stroke="#e2e2e2" fill="none" stroke-width="1.3"/><path d="M0-5L2.5-7.5L7.5-2.5L5 0M-7 7L-2 2" stroke="#e2e2e2" fill="none" stroke-width="1.2"/></svg>
<svg style="left:28.5px;top:575px" width="4" height="4"><path d="M4 0V4H0Z" fill="#bdbdbd"/></svg>
<svg style="left:9.5px;top:585.0px" width="20" height="20" viewBox="-10 -10 20 20"><path d="M-5-8L6 2L1 2.5L4 8L2 9L-1 3.5L-5 7Z" fill="#e2e2e2"/></svg>
<svg style="left:28.5px;top:602px" width="4" height="4"><path d="M4 0V4H0Z" fill="#bdbdbd"/></svg>
<svg style="left:9.5px;top:609.5px" width="20" height="20" viewBox="-10 -10 20 20"><rect x="-7.5" y="-6" width="15" height="12" fill="#6b6b6b" stroke="#e2e2e2" stroke-width="1.4"/></svg>
<svg style="left:28.5px;top:626px" width="4" height="4"><path d="M4 0V4H0Z" fill="#bdbdbd"/></svg>
<svg style="left:9.5px;top:636.0px" width="20" height="20" viewBox="-10 -10 20 20"><path d="M-5 8C-7 4-8 1-6.5 0C-5.5-0.5-5 1-4 2V-5C-4-6.5-2-6.5-2-5V-1V-6.5C-2-8 0-8 0-6.5V-1V-6C0-7.5 2-7.5 2-6V-0.5V-4.5C2-6 4-6 4-4.5V3C4 6 2 8 1 8Z" fill="#e2e2e2"/><path d="M-2-9C2-11 6-9 7.5-6M7.5-6L8.5-9M7.5-6L4.5-5.5" stroke="#e2e2e2" fill="none" stroke-width="1.3"/><path d="M5 0L9 3L5 6" fill="#e2e2e2"/></svg>
<svg style="left:28.5px;top:653px" width="4" height="4"><path d="M4 0V4H0Z" fill="#bdbdbd"/></svg>
<div class="a" style="left:4px;top:660px;width:31px;height:24px;background:#2e2e2e;border-radius:3px"></div>
<svg style="left:9.5px;top:662.0px" width="20" height="20" viewBox="-10 -10 20 20"><circle cx="-1.5" cy="-1.5" r="5.5" stroke="#e2e2e2" fill="none" stroke-width="1.5"/><path d="M2.5 2.5L7 7" stroke="#e2e2e2" stroke-width="2"/><path d="M-4-3C-3.5-4.5-2.5-5-1-5" stroke="#e2e2e2" fill="none" stroke-width="0.8"/></svg>
<svg style="left:9.5px;top:688.0px" width="20" height="20" viewBox="-10 -10 20 20"><circle cx="-6" cy="0" r="1.8" fill="#e2e2e2"/><circle cx="0" cy="0" r="1.8" fill="#e2e2e2"/><circle cx="6" cy="0" r="1.8" fill="#e2e2e2"/></svg>
<svg style="left:28.5px;top:705px" width="4" height="4"><path d="M4 0V4H0Z" fill="#bdbdbd"/></svg>
<svg style="left:5px;top:717px" width="11" height="11"><rect x="4" y="4" width="6.5" height="6.5" fill="#dcdcdc"/><rect x="0.5" y="0.5" width="6" height="6" fill="#111" stroke="#dcdcdc" stroke-width="1"/></svg>
<svg style="left:21px;top:716px" width="11" height="12"><path d="M1 3H7.5V10" fill="none" stroke="#dcdcdc" stroke-width="1.3"/><path d="M0 3L3 0.5V5.5ZM7.5 11.5L5 8.5H10Z" fill="#dcdcdc"/></svg>
<div class="a" style="left:14.5px;top:742px;width:19px;height:19px;background:#ffffff;outline:1px solid #2a2a2a"></div>
<div class="a" style="left:4.5px;top:732.5px;width:19px;height:19px;background:#000000;border:1.5px solid #f0f0f0;outline:1px solid #2a2a2a"></div>
<svg style="left:11px;top:773px" width="18" height="14"><rect x="0.7" y="0.7" width="16" height="12" fill="none" stroke="#dcdcdc" stroke-width="1.3"/><circle cx="8.7" cy="6.7" r="3.8" fill="none" stroke="#dcdcdc" stroke-width="1" stroke-dasharray="1 1.2"/></svg>
<svg style="left:11px;top:799px" width="18" height="14"><rect x="0.7" y="4.7" width="11" height="8" fill="none" stroke="#dcdcdc" stroke-width="1.3"/><rect x="5.2" y="0.7" width="11.5" height="8.5" fill="#535353" stroke="#dcdcdc" stroke-width="1.3"/></svg>
<svg style="left:28.5px;top:813px" width="4" height="4"><path d="M4 0V4H0Z" fill="#bdbdbd"/></svg>
<svg style="left:0;top:0" width="1920" height="1080"><defs><clipPath id="cv"><rect x="58" y="105" width="1362" height="918"/></clipPath></defs><g clip-path="url(#cv)" fill="none" stroke-linecap="round" stroke-linejoin="round">
<g stroke="#d3d5f7" stroke-width="1">
<ellipse cx="895" cy="320" rx="112" ry="125" transform="rotate(0 895 320)"/>
<ellipse cx="890" cy="335" rx="95" ry="100" transform="rotate(0 890 335)"/>
<ellipse cx="900" cy="300" rx="130" ry="95" transform="rotate(0 900 300)"/>
<ellipse cx="870" cy="660" rx="95" ry="115" transform="rotate(0 870 660)"/>
<ellipse cx="910" cy="680" rx="120" ry="105" transform="rotate(0 910 680)"/>
<path d="M1182.0 743.5C1187.3 743.8 1204.5 741.8 1214.0 745.0C1223.5 748.2 1233.2 753.2 1239.0 762.5C1244.8 771.8 1249.5 785.8 1249.0 800.6C1248.5 815.4 1244.0 835.5 1236.0 851.4C1228.0 867.3 1215.3 882.7 1201.0 895.9C1186.7 909.1 1169.0 920.2 1150.0 930.8C1131.0 941.4 1108.2 951.5 1087.0 959.4C1065.8 967.3 1033.7 975.2 1023.0 978.4"/>
<path d="M1239.0 762.5C1243.8 767.2 1262.2 778.3 1268.0 791.0C1273.8 803.7 1275.7 822.8 1274.0 838.7C1272.3 854.6 1268.0 870.4 1258.0 886.3C1248.0 902.2 1232.0 920.8 1214.0 934.0C1196.0 947.2 1172.2 957.2 1150.0 965.7C1127.8 974.2 1092.5 981.6 1081.0 984.8"/>
<path d="M1004.0 934.0C1009.8 930.8 1027.8 919.2 1039.0 915.0C1050.2 910.8 1062.0 908.1 1071.0 908.6C1080.0 909.1 1088.8 912.2 1093.0 918.0C1097.2 923.8 1097.5 935.5 1096.5 943.5C1095.5 951.5 1092.2 959.4 1087.0 965.7C1081.8 972.1 1075.7 977.9 1065.0 981.6C1054.3 985.3 1030.0 986.9 1023.0 988.0"/>
<path d="M1074.0 911.7C1076.2 914.9 1085.3 922.8 1087.0 930.8C1088.7 938.8 1084.5 954.6 1084.0 959.4"/>
<path d="M560.0 760.0C566.7 757.5 586.7 746.3 600.0 745.0C613.3 743.7 625.0 744.5 640.0 752.0C655.0 759.5 681.7 783.7 690.0 790.0"/>
<path d="M555.0 800.0C558.3 811.7 564.2 850.8 575.0 870.0C585.8 889.2 600.8 901.7 620.0 915.0C639.2 928.3 678.3 944.2 690.0 950.0"/>
<path d="M960.0 120.0C964.2 126.7 981.7 146.7 985.0 160.0C988.3 173.3 980.8 193.3 980.0 200.0"/>
<path d="M940.0 115.0C941.7 120.8 949.2 135.8 950.0 150.0C950.8 164.2 945.8 191.7 945.0 200.0"/>
<path d="M860.0 960.0C871.7 965.0 906.7 983.3 930.0 990.0C953.3 996.7 978.3 1000.0 1000.0 1000.0C1021.7 1000.0 1050.0 991.7 1060.0 990.0"/>
<path d="M790.0 970.0L800.0 1023.0"/>
<path d="M1000.0 970.0L990.0 1023.0"/>
<path d="M690.0 930.0C696.7 925.0 718.3 901.7 730.0 900.0C741.7 898.3 753.3 908.3 760.0 920.0C766.7 931.7 770.0 955.0 770.0 970.0C770.0 985.0 761.7 1003.3 760.0 1010.0"/>
</g>
<g stroke="#dadada" stroke-width="1.6">
<ellipse cx="341" cy="620" rx="110" ry="102" transform="rotate(0 341 620)"/>
<ellipse cx="341" cy="612" rx="100" ry="88" transform="rotate(0 341 612)"/>
<ellipse cx="335" cy="921" rx="80" ry="97" transform="rotate(0 335 921)"/>
<ellipse cx="345" cy="915" rx="95" ry="92" transform="rotate(0 345 915)"/>
<ellipse cx="325" cy="930" rx="68" ry="88" transform="rotate(0 325 930)"/>
<ellipse cx="362" cy="905" rx="88" ry="76" transform="rotate(12 362 905)"/>
<ellipse cx="312" cy="925" rx="62" ry="95" transform="rotate(-8 312 925)"/>
<path d="M123.6 1018.0L232.3 853.4"/>
<path d="M400.0 812.0C420.0 818.3 495.8 840.3 520.0 850.0C544.2 859.7 540.8 866.7 545.0 870.0"/>
<path d="M470.0 830.0C480.0 841.7 515.0 871.7 530.0 900.0C545.0 928.3 555.0 983.3 560.0 1000.0"/>
<path d="M201.3 639.5C217.8 640.8 266.9 644.8 300.0 647.0C333.1 649.2 383.3 651.9 400.0 652.9"/>
<path d="M185.2 526.7L217.4 520.0"/>
<path d="M230.0 700.0C246.7 702.5 296.7 713.0 330.0 715.0C363.3 717.0 405.0 713.7 430.0 712.0C455.0 710.3 471.7 706.2 480.0 705.0"/>
</g>
<g stroke="#6e6e6e" stroke-width="1.1">
<path d="M201.3 663.6C195.9 660.0 178.9 649.7 169.1 642.1C159.2 634.5 148.5 626.5 142.2 618.0C135.9 609.5 131.9 601.0 131.5 591.1C131.1 581.2 134.1 568.3 139.5 558.9C144.9 549.5 154.3 541.0 163.7 534.7C173.1 528.4 186.9 523.8 195.9 521.3C204.9 518.8 213.8 520.2 217.4 520.0"/>
<path d="M183.8 545.5C185.8 541.9 192.1 532.1 195.9 524.0C199.7 515.9 201.3 504.9 206.7 497.1C212.1 489.3 221.0 481.5 228.2 477.0C235.3 472.5 241.5 470.5 249.6 470.3C257.6 470.1 268.4 472.0 276.5 475.6C284.6 479.2 292.4 486.4 298.0 491.8C303.6 497.2 308.1 505.2 310.1 507.9"/>
<path d="M201.3 663.6C202.2 656.0 203.1 631.9 206.7 618.0C210.3 604.1 215.7 592.0 222.8 580.4C230.0 568.8 239.8 557.2 249.6 548.2C259.4 539.2 269.4 532.1 281.9 526.7C294.4 521.3 317.6 517.7 324.8 515.9"/>
<path d="M271.1 462.2C275.6 460.0 289.1 451.7 298.0 448.8C306.9 445.9 316.8 442.6 324.8 444.8C332.9 447.0 341.8 455.3 346.3 462.2C350.8 469.1 350.8 482.4 351.7 486.4"/>
<path d="M271.1 462.2C275.6 463.6 290.4 467.2 298.0 470.3C305.6 473.4 312.3 477.6 316.8 481.0C321.3 484.4 323.5 488.8 324.8 490.4"/>
<path d="M347.6 446.1C351.0 447.5 362.2 449.7 367.8 454.2C373.4 458.7 379.4 465.4 381.2 473.0C383.0 480.6 377.4 496.7 378.5 499.8C379.6 502.9 387.3 490.0 387.7 491.8C388.1 493.6 382.1 507.5 381.0 510.6"/>
<path d="M255.0 542.8C255.2 538.3 253.6 523.5 256.3 515.9C259.0 508.3 264.2 502.0 271.1 497.1C278.1 492.2 289.5 488.2 298.0 486.4C306.5 484.6 318.1 486.4 322.1 486.4"/>
<path d="M263.1 542.8C266.7 539.2 276.4 527.1 284.5 521.3C292.6 515.5 306.9 510.1 311.4 507.9"/>
<path d="M330.2 515.9C324.8 517.7 306.1 521.8 298.0 526.7C289.9 531.6 284.6 538.4 281.9 545.5C279.2 552.6 279.2 562.9 281.9 569.6C284.6 576.3 291.7 581.9 298.0 585.7C304.3 589.5 312.6 590.5 319.5 592.5C326.4 594.5 336.2 596.9 339.6 597.8"/>
<path d="M339.6 597.8C340.3 594.0 340.7 581.9 343.6 575.0C346.5 568.1 352.8 562.5 357.0 556.2C361.2 549.9 369.1 534.3 369.1 537.4C369.1 540.5 355.0 571.4 357.0 575.0C359.0 578.6 376.7 565.2 381.2 558.9C385.7 552.6 384.3 543.2 383.9 537.4C383.4 531.6 379.4 526.2 378.5 524.0"/>
<path d="M343.6 483.7C342.7 497.1 340.0 537.4 338.2 564.3C336.4 591.1 334.2 618.8 332.9 644.8C331.6 670.8 329.8 691.2 330.2 720.0C330.6 748.8 334.3 767.0 335.1 817.5C335.9 868.0 335.1 988.8 335.1 1023.0" stroke-width="1.0"/>
<path d="M237.5 592.5C239.5 592.3 243.1 590.0 249.6 591.1C256.1 592.2 266.6 594.7 276.5 599.2C286.4 603.7 298.8 610.9 308.7 618.0C318.6 625.1 331.1 638.1 335.6 642.1"/>
<path d="M252.3 596.5C251.9 600.1 249.2 611.3 249.6 618.0C250.0 624.7 250.5 632.3 255.0 636.8C259.5 641.3 266.6 643.0 276.5 644.8C286.4 646.6 306.9 648.8 314.1 647.5C321.3 646.2 318.6 638.6 319.5 636.8"/>
<path d="M289.9 615.3C290.3 618.0 290.4 627.6 292.6 631.4C294.8 635.2 299.7 637.6 303.3 638.1C306.9 638.6 312.3 634.8 314.1 634.1"/>
<path d="M343.6 644.8C349.4 642.1 368.2 632.7 378.5 628.7C388.8 624.7 395.8 622.5 405.2 620.7C414.6 618.9 428.4 617.6 434.7 618.0C441.0 618.4 441.4 622.4 442.8 623.3"/>
<path d="M362.2 642.1C367.6 643.0 381.0 647.5 394.4 647.5C407.8 647.5 434.7 643.0 442.8 642.1"/>
<path d="M375.6 634.1C377.0 635.4 379.7 640.8 383.7 642.1C387.7 643.4 396.0 645.2 399.8 642.1C403.6 639.0 405.4 626.4 406.5 623.3"/>
<path d="M271.1 663.6C275.6 662.3 287.7 657.8 298.0 655.6C308.3 653.4 320.8 651.1 332.9 650.2C344.9 649.3 358.7 649.3 370.3 650.2C381.9 651.1 396.9 652.0 402.5 655.6C408.1 659.2 404.2 664.6 403.8 671.7C403.4 678.9 400.9 690.5 399.8 698.5C398.7 706.5 397.6 716.4 397.1 720.0"/>
<path d="M287.2 674.4C291.7 672.6 306.5 666.1 314.1 663.6C321.7 661.1 325.8 659.6 332.9 659.6C340.0 659.6 348.4 661.6 356.9 663.6C365.4 665.6 381.0 667.7 383.7 671.7C386.4 675.7 377.9 681.5 373.0 687.8C368.1 694.1 360.5 704.1 354.2 709.3C347.9 714.4 338.9 717.4 335.4 718.7C331.8 720.0 336.4 719.8 332.9 717.3C329.3 714.8 319.9 708.8 314.1 703.9C308.3 699.0 302.5 692.7 298.0 687.8C293.5 682.9 289.0 676.6 287.2 674.4"/>
<path d="M271.1 663.6C270.7 667.6 268.4 678.4 268.4 687.8C268.4 697.2 267.7 709.8 271.1 720.0C274.5 730.2 285.9 744.2 288.9 749.0"/>
<path d="M209.4 626.0C209.8 629.1 209.3 637.6 212.0 644.8C214.7 652.0 225.7 664.1 225.5 669.0C225.3 673.9 210.2 672.2 210.7 674.4C211.1 676.6 223.9 678.4 228.2 682.4C232.4 686.4 234.9 695.8 236.2 698.5"/>
<path d="M236.2 591.1C235.3 596.5 231.2 609.9 230.8 623.3C230.4 636.7 231.2 659.2 233.5 671.7C235.8 684.2 240.7 691.4 244.3 698.5C247.9 705.6 247.6 706.2 255.0 714.6C262.4 723.0 283.2 743.3 288.9 749.0"/>
<path d="M379.7 518.6C382.1 514.1 389.2 497.6 394.4 491.8C399.5 486.0 403.4 485.9 410.6 483.7C417.8 481.5 428.4 478.9 437.4 478.9C446.3 478.9 456.2 480.2 464.3 483.7C472.4 487.2 480.3 493.5 485.7 499.8C491.1 506.1 493.8 515.0 496.5 521.3C499.2 527.6 499.2 530.7 501.9 537.4C504.6 544.1 510.8 557.6 512.6 561.6"/>
<path d="M501.9 534.7C505.5 537.0 517.0 542.4 523.3 548.2C529.6 554.0 536.1 562.5 539.5 569.6C542.9 576.8 544.0 583.0 543.5 591.1C543.0 599.2 541.0 609.5 536.8 618.0C532.5 626.5 524.7 635.8 518.0 642.1C511.3 648.4 503.2 651.4 496.5 655.6C489.8 659.9 480.8 665.6 477.7 667.6"/>
<path d="M405.2 497.1C405.6 499.8 405.7 509.2 407.9 513.2C410.1 517.2 416.8 519.9 418.6 521.3"/>
<path d="M402.5 521.3C406.5 524.0 419.1 531.1 426.7 537.4C434.3 543.7 441.9 550.8 448.2 558.9C454.5 567.0 459.8 576.8 464.3 585.7C468.8 594.7 472.6 603.6 475.0 612.6C477.4 621.6 478.6 630.5 479.0 639.5C479.4 648.5 477.9 661.8 477.7 666.3"/>
<path d="M407.9 526.7C407.0 528.9 400.7 535.2 402.5 540.1C404.3 545.0 413.7 549.5 418.6 556.2C423.5 562.9 428.0 571.9 432.0 580.4C436.0 588.9 440.6 598.2 442.8 607.2C445.1 616.2 445.5 624.2 445.5 634.1C445.5 644.0 444.2 652.9 442.8 666.3C441.4 679.7 438.3 706.5 437.4 714.6"/>
<path d="M475.0 626.0C473.2 627.8 466.5 632.3 464.3 636.8C462.1 641.3 464.3 648.0 461.6 652.9C458.9 657.8 447.3 665.4 448.2 666.3C449.1 667.2 465.7 656.5 467.0 658.3C468.3 660.1 456.6 673.9 456.2 677.0C455.8 680.1 465.6 676.1 464.3 677.0C463.0 677.9 450.9 681.5 448.2 682.4"/>
<path d="M410.6 682.4L407.9 695.8"/>
<path d="M299.2 742.2C299.7 747.9 300.9 770.1 302.0 776.4C303.1 782.7 304.6 774.0 305.7 780.0C306.8 786.0 308.1 806.9 308.6 812.3"/>
<path d="M371.1 742.2C370.2 747.9 367.6 770.1 366.0 776.4C364.4 782.7 362.7 774.0 361.5 780.0C360.3 786.0 359.1 806.9 358.6 812.3"/>
<path d="M309.4 769.6C311.2 773.0 315.7 782.5 320.0 790.1C324.3 797.7 330.4 815.3 335.1 815.3C339.8 815.3 344.5 797.3 348.0 790.1C351.5 782.9 354.7 775.0 356.0 772.0"/>
<path d="M323.1 776.4C325.1 777.5 331.1 783.3 335.1 783.3C339.1 783.3 345.1 777.5 347.1 776.4"/>
<path d="M288.9 749.0C296.6 750.7 316.8 759.9 335.1 759.3C353.4 758.7 381.5 750.5 398.5 745.6C415.5 740.7 430.6 732.6 437.0 730.0"/>
<path d="M291.0 780.0C286.1 782.9 272.4 792.2 261.6 797.6C250.8 803.0 238.6 806.9 226.4 812.3C214.2 817.7 198.5 823.1 188.2 830.0C177.9 836.9 169.8 846.1 164.7 853.4C159.6 860.7 158.6 866.6 157.4 874.0C156.2 881.4 157.4 893.6 157.4 897.5"/>
<path d="M382.1 780.0C389.0 782.9 410.0 791.7 423.2 797.6C436.4 803.5 449.2 809.9 461.4 815.3C473.6 820.7 487.3 823.6 496.6 830.0C505.9 836.4 512.3 845.6 517.2 853.4C522.1 861.2 524.3 869.6 526.0 877.0C527.7 884.4 527.2 894.1 527.5 897.5"/>
<path d="M229.3 815.3C246.9 814.8 296.4 812.3 335.1 812.3C373.8 812.3 440.3 814.8 461.4 815.3"/>
<path d="M232.3 824.1C249.4 823.9 303.3 823.1 335.1 822.6C366.9 822.1 408.5 821.4 423.2 821.1" stroke-width="1.0"/>
<path d="M252.8 818.2C247.4 821.6 229.8 831.0 220.5 838.8C211.2 846.6 201.4 858.8 197.0 865.2C192.6 871.6 191.7 871.6 194.1 877.0C196.5 882.4 208.0 890.6 211.7 897.5C215.4 904.4 213.6 910.3 216.1 918.1C218.6 925.9 222.7 936.7 226.4 944.5C230.1 952.3 233.2 956.3 238.1 965.1C243.0 973.9 250.9 989.1 255.8 997.4C260.7 1005.7 265.6 1012.1 267.5 1015.0"/>
<path d="M426.1 821.1C430.5 824.0 444.3 831.9 452.6 838.8C460.9 845.7 471.7 855.0 476.1 862.3C480.5 869.6 479.5 875.9 479.0 882.8C478.5 889.6 475.1 896.0 473.2 903.4C471.2 910.8 469.8 919.5 467.3 926.9C464.9 934.2 463.4 938.7 458.5 947.5C453.6 956.3 445.2 969.5 437.9 979.8C430.5 990.1 418.3 1004.2 414.4 1009.1"/>
<path d="M238.1 965.1C254.3 966.6 301.3 974.1 335.1 973.9C368.9 973.6 423.2 965.3 440.8 963.6"/>
<path d="M258.7 1015.0C265.1 1011.1 284.2 996.9 296.9 991.5C309.6 986.1 323.4 982.7 335.1 982.7C346.9 982.7 356.6 986.1 367.4 991.5C378.2 996.9 394.3 1011.1 399.7 1015.0"/>
<path d="M158.8 871.1C155.4 874.5 145.2 883.3 138.3 891.6C131.5 899.9 124.1 911.2 117.7 921.0C111.3 930.8 105.5 940.6 100.1 950.4C94.7 960.2 87.9 974.9 85.4 979.8"/>
<path d="M191.1 879.9C187.2 881.9 174.4 885.7 167.6 891.6C160.8 897.5 154.9 906.3 150.0 915.1C145.1 923.9 141.2 937.1 138.3 944.5C135.4 951.9 133.4 956.8 132.4 959.2"/>
<path d="M229.3 906.3C224.9 910.7 211.2 923.5 202.9 932.8C194.6 942.1 187.2 952.3 179.4 962.1C171.6 971.9 159.8 986.6 155.9 991.5"/>
<path d="M85.4 979.8C87.4 976.8 92.2 966.5 97.1 962.1C102.0 957.7 108.9 954.3 114.8 953.3C120.7 952.3 127.5 953.3 132.4 956.3C137.3 959.2 139.7 964.1 144.1 971.0C148.5 977.9 154.4 988.7 158.8 997.4C163.2 1006.1 168.6 1018.7 170.6 1023.0"/>
<path d="M85.4 979.8C85.9 982.7 86.3 990.2 88.3 997.4C90.2 1004.6 95.6 1018.7 97.1 1023.0"/>
<path d="M214.6 915.1C211.2 921.0 200.9 939.6 194.1 950.4C187.2 961.2 179.9 972.9 173.5 979.8C167.1 986.6 158.8 989.5 155.9 991.5" stroke-width="1.0"/>
<path d="M526.0 877.0C529.9 880.4 541.7 889.2 549.5 897.5C557.3 905.8 567.1 917.1 573.0 926.9C578.9 936.7 581.8 949.4 584.8 956.3C587.8 963.1 589.7 966.0 590.7 968.0"/>
<path d="M476.1 903.4C479.5 901.9 490.2 895.6 496.6 894.6C503.0 893.6 508.9 893.6 514.3 897.5C519.7 901.4 524.6 910.3 529.0 918.1C533.4 925.9 536.8 936.2 540.7 944.5C544.6 952.8 550.5 964.1 552.5 968.0"/>
<path d="M537.8 982.7C540.7 980.8 548.5 974.2 555.4 971.0C562.2 967.8 573.0 963.6 578.9 963.6C584.8 963.6 587.8 966.4 590.7 971.0C593.6 975.6 596.0 982.8 596.5 991.5C597.0 1000.2 594.1 1017.8 593.6 1023.0"/>
<path d="M537.8 982.7C534.4 986.1 523.1 996.6 517.2 1003.3C511.3 1010.0 504.9 1019.7 502.5 1023.0"/>
<path d="M473.2 926.9C476.1 931.8 484.0 948.5 490.8 956.3C497.6 964.1 506.5 969.5 514.3 973.9C522.1 978.3 533.9 981.2 537.8 982.7"/>
<path d="M523.1 862.3L529.0 897.5" stroke-width="1.0"/>
<path d="M291.0 794.7L286.0 798.0" stroke-width="1.0"/>
<path d="M379.2 794.7L384.0 798.0" stroke-width="1.0"/>
<path d="M56.0 697.7C59.4 700.0 70.8 705.1 76.5 711.4C82.2 717.7 86.8 725.0 90.2 735.3C93.6 745.6 95.9 766.7 97.1 773.0"/>
<path d="M97.1 755.9C101.7 758.8 117.7 765.0 124.5 773.0C131.3 781.0 135.3 794.1 138.2 803.8C141.0 813.5 141.6 822.1 141.6 831.2C141.6 840.3 141.0 850.0 138.2 858.6C135.3 867.2 131.3 875.8 124.5 882.6C117.7 889.5 106.2 895.7 97.1 899.7C88.0 903.7 74.3 905.5 69.7 906.6"/>
<path d="M56.0 810.7C58.3 815.3 66.9 823.3 69.7 838.1C72.5 852.9 72.5 889.4 73.1 899.7"/>
</g>
<g stroke="#606060" stroke-width="2.2">
<path d="M333.8 306.3C331.2 306.4 323.4 306.3 318.2 306.9C313.0 307.5 306.9 308.4 302.5 309.9C298.1 311.4 294.7 313.3 291.7 315.9C288.7 318.5 285.8 322.8 284.4 325.6C283.0 328.4 282.6 330.4 283.2 332.8C283.8 335.2 286.7 337.8 288.1 340.0C289.5 342.2 291.0 344.2 291.7 346.0C292.4 347.8 292.2 350.0 292.3 350.8"/>
<path d="M292.3 350.8C293.0 350.2 293.8 348.3 296.5 347.2C299.2 346.1 304.1 344.9 308.5 344.2C312.9 343.5 319.2 342.9 323.0 343.0C326.8 343.1 329.7 343.7 331.4 344.8C333.1 345.9 333.4 347.2 333.2 349.6C333.0 352.0 331.9 355.9 330.2 359.3C328.5 362.7 326.0 366.5 323.0 370.1C320.0 373.7 315.9 377.8 312.1 381.0C308.3 384.2 303.7 387.1 300.1 389.4C296.5 391.7 292.1 393.9 290.5 394.8"/>
<path d="M344.6 289.4C345.4 290.8 348.6 294.9 349.5 297.9C350.4 300.9 350.5 304.5 350.1 307.5C349.7 310.5 348.2 313.5 347.1 315.9C346.0 318.3 344.0 321.0 343.4 322.0"/>
<path d="M367.5 291.9C366.7 293.9 363.9 299.9 362.7 303.9C361.5 307.9 360.5 312.4 360.3 316.0C360.1 319.6 360.3 323.5 361.5 325.6C362.7 327.7 365.1 328.6 367.5 328.6C369.9 328.6 373.3 327.0 375.9 325.6C378.5 324.2 382.0 321.0 383.2 320.1"/>
<path d="M387.4 289.4C386.9 294.0 385.1 309.1 384.4 317.1C383.7 325.1 383.2 329.2 383.2 337.6C383.2 346.0 384.2 362.7 384.4 367.7"/>
<path d="M407.3 285.8L403.6 300.3"/>
<path d="M416.9 282.2L413.3 297.9"/>
</g>
<g stroke="#111111" stroke-width="1.8">
<path d="M736.3 359.2C730.7 357.4 712.6 353.7 702.6 348.3C692.6 342.9 683.1 335.5 676.1 326.7C669.1 317.9 663.3 305.4 660.5 295.4C657.7 285.4 657.9 275.7 659.3 266.5C660.7 257.3 664.1 247.6 668.9 240.0C673.7 232.4 681.3 226.1 688.1 220.7C694.9 215.3 703.2 210.8 709.8 207.5C716.4 204.2 723.9 205.2 727.9 201.0C731.9 196.8 730.9 188.5 733.9 182.2C736.9 175.9 740.7 169.0 745.9 163.0C751.1 157.0 757.2 150.4 765.2 146.1C773.2 141.8 784.9 137.6 794.1 137.0C803.3 136.4 812.3 138.6 820.5 142.5C828.7 146.4 839.6 157.6 843.4 160.6" stroke-width="2.0"/>
<path d="M727.9 201.0C726.5 203.5 722.8 210.4 719.4 215.9C716.0 221.4 709.4 231.0 707.4 234.0" stroke-width="1.5"/>
<path d="M736.3 360.4C736.1 357.0 735.3 346.7 735.2 340.0C735.1 333.3 734.5 328.5 735.8 320.0C737.1 311.5 739.6 298.0 743.0 288.9C746.4 279.8 750.6 273.0 755.9 265.6C761.2 258.2 767.6 251.9 774.8 244.8C782.0 237.7 790.9 229.5 798.9 223.1C806.9 216.7 819.0 209.1 823.0 206.3" stroke-width="2.8"/>
<path d="M826.1 232.1C825.2 226.1 820.8 205.5 821.0 195.8C821.2 186.1 823.7 179.8 827.4 173.7C831.1 167.6 835.9 163.2 843.0 159.5C850.1 155.8 862.4 153.1 870.2 151.7C878.0 150.3 883.7 150.6 889.7 151.0C895.8 151.4 903.7 153.8 906.5 154.3" stroke-width="1.8"/>
<path d="M850.8 139.4C852.9 137.8 857.2 132.7 863.7 129.6C870.2 126.5 883.4 122.3 889.7 120.6C896.0 118.9 897.0 119.1 901.3 119.3C905.6 119.5 910.4 118.9 915.6 121.9C920.8 124.9 927.0 130.7 932.4 137.4C937.8 144.1 945.4 157.9 948.0 162.0" stroke-width="1.8"/>
<path d="M850.8 139.4C855.1 139.9 869.1 141.1 876.7 142.6C884.3 144.1 889.7 146.0 896.2 148.6C902.7 151.2 912.4 156.6 915.6 158.2" stroke-width="1.6"/>
<path d="M880.0 182.8L889.1 180.2" stroke-width="1.4"/>
<path d="M952.6 200.9C954.8 196.2 959.6 180.2 965.6 172.4C971.6 164.6 979.0 158.8 988.9 154.3C998.8 149.8 1014.0 145.4 1025.2 145.2C1036.4 145.0 1048.1 148.5 1056.3 153.0C1064.5 157.5 1070.2 164.8 1074.5 172.4C1078.8 180.0 1080.0 189.2 1082.2 198.3C1084.4 207.4 1086.1 220.4 1087.4 226.9C1088.7 233.4 1089.6 235.5 1090.0 237.2" stroke-width="1.8"/>
<path d="M1084.8 210.0C1089.5 212.4 1105.1 218.0 1113.3 224.3C1121.5 230.6 1128.7 238.1 1134.1 247.6C1139.5 257.1 1144.4 270.5 1145.7 281.3C1147.0 292.1 1145.1 303.3 1141.9 312.4C1138.7 321.5 1133.2 328.9 1126.3 335.8C1119.4 342.7 1109.0 349.1 1100.4 353.9C1091.8 358.6 1081.8 361.5 1074.5 364.3C1067.2 367.1 1059.3 369.7 1056.3 370.8" stroke-width="1.8"/>
<path d="M983.7 200.9C987.2 203.1 997.6 208.3 1004.5 213.9C1011.4 219.5 1019.2 226.8 1025.2 234.6C1031.2 242.4 1036.2 251.1 1040.7 260.6C1045.2 270.1 1049.4 280.9 1052.4 291.7C1055.4 302.5 1057.8 312.4 1058.9 325.4C1060.0 338.4 1058.9 362.1 1058.9 369.5" stroke-width="2.8"/>
<path d="M975.9 182.8C976.3 185.4 978.7 192.2 978.5 198.3C978.3 204.4 975.2 215.6 974.6 219.1" stroke-width="1.4"/>
<path d="M780.6 288.9C780.8 286.5 779.5 278.3 781.9 274.6C784.3 270.9 789.2 268.0 794.8 266.9C800.4 265.8 808.2 266.2 815.6 268.1C823.0 270.0 831.6 273.7 838.9 278.5C846.2 283.3 853.5 290.2 859.6 296.7C865.7 303.2 870.4 310.7 875.2 317.4C880.0 324.1 886.0 333.6 888.2 336.9" stroke-width="2.4"/>
<path d="M781.9 288.9C783.6 287.2 787.0 280.7 792.2 278.5C797.4 276.3 805.2 274.6 813.0 275.9C820.8 277.2 830.7 281.1 838.9 286.3C847.1 291.5 855.3 300.1 862.2 307.0C869.1 313.9 875.6 322.6 880.4 327.8C885.1 333.0 889.0 336.5 890.7 338.2" stroke-width="1.5"/>
<path d="M792.2 286.3C792.6 289.8 793.5 300.5 794.8 307.0C796.1 313.5 796.5 320.9 800.0 325.2C803.5 329.5 809.1 331.1 815.6 333.0C822.1 334.9 830.3 336.5 838.9 336.9C847.5 337.3 862.4 337.6 867.4 335.6C872.4 333.7 868.5 326.9 868.7 325.2" stroke-width="1.5"/>
<path d="M829.8 288.9C829.6 291.9 827.4 301.2 828.5 307.0C829.6 312.8 832.8 320.4 836.3 323.9C839.8 327.4 845.4 327.8 849.3 327.8C853.2 327.8 857.0 325.4 859.6 323.9C862.2 322.4 863.9 319.6 864.8 318.7" stroke-width="2.0"/>
<path d="M885.6 294.1C886.9 297.1 891.6 305.3 893.3 312.2C895.0 319.1 895.5 331.7 895.9 335.6" stroke-width="1.5"/>
<path d="M780.8 275.3C780.6 277.1 778.7 282.7 779.5 286.1C780.3 289.5 784.2 292.4 785.6 295.6C787.0 298.8 787.7 301.9 787.6 305.1C787.5 308.3 786.9 310.3 784.9 314.6C782.9 318.9 777.0 328.1 775.4 330.8" stroke-width="1.8"/>
<path d="M890.7 338.2C894.2 336.9 903.7 333.9 911.5 330.4C919.3 326.9 928.8 321.7 937.4 317.4C946.0 313.1 954.6 307.9 963.3 304.5C971.9 301.1 981.6 298.0 989.3 296.7C997.0 295.4 1004.3 295.1 1009.6 296.9C1014.9 298.6 1019.3 303.8 1021.3 307.2C1023.2 310.6 1022.8 314.6 1021.3 317.6C1019.8 320.6 1013.7 324.1 1012.2 325.4" stroke-width="2.4"/>
<path d="M906.3 335.6C910.6 334.3 922.7 330.8 932.2 327.8C941.7 324.8 953.8 320.0 963.3 317.4C972.8 314.8 982.4 313.1 989.3 312.2C996.2 311.3 1002.2 312.2 1004.8 312.2" stroke-width="1.5"/>
<path d="M921.9 335.6C922.8 336.2 920.1 338.8 927.0 339.4C933.9 340.0 951.6 340.9 963.3 339.4C975.0 337.9 990.5 334.1 997.0 330.4C1003.5 326.7 1001.3 319.6 1002.2 317.4" stroke-width="1.5"/>
<path d="M934.8 326.5C936.5 327.8 940.9 333.2 945.2 334.3C949.5 335.4 956.8 334.9 960.7 333.0C964.6 331.1 967.2 324.3 968.5 322.6" stroke-width="2.0"/>
<path d="M827.2 345.3C831.8 345.1 846.9 344.6 855.0 343.9C863.1 343.2 868.3 342.0 875.8 341.1C883.3 340.2 892.7 338.4 900.0 338.3C907.3 338.2 911.4 339.7 919.6 340.8C927.8 341.9 942.1 344.1 949.3 345.2C956.5 346.3 960.4 347.0 962.6 347.4" stroke-width="1.5"/>
<path d="M851.9 348.5C852.3 350.2 854.7 356.3 854.4 358.9C854.1 361.5 850.7 363.1 850.0 364.0" stroke-width="1.4"/>
<path d="M929.6 347.2C929.6 349.1 928.9 356.1 929.6 358.9C930.3 361.7 933.3 363.1 934.0 364.0" stroke-width="1.4"/>
<path d="M844.1 371.9C845.4 370.4 845.0 365.0 851.9 362.8C858.8 360.6 872.2 359.1 885.6 358.9C899.0 358.7 922.7 359.3 932.2 361.5C941.7 363.7 940.9 370.2 942.6 371.9" stroke-width="1.6"/>
<path d="M844.1 374.4C845.8 377.0 850.1 384.4 854.4 390.0C858.7 395.6 864.0 403.2 870.0 408.2C876.0 413.2 882.9 420.7 890.7 419.8C898.5 418.9 909.4 408.8 916.7 403.0C924.1 397.2 930.5 390.0 934.8 384.8C939.1 379.6 941.3 374.0 942.6 371.9" stroke-width="2.0"/>
<path d="M844.1 371.9C847.5 371.2 856.2 368.9 864.8 368.0C873.4 367.1 885.5 366.7 895.9 366.7C906.3 366.7 919.2 367.1 927.0 368.0C934.8 368.9 940.0 371.2 942.6 371.9" stroke-width="1.5"/>
<path d="M846.7 375.7C850.6 376.8 862.7 380.0 870.0 382.2C877.3 384.4 883.8 388.9 890.7 388.7C897.6 388.5 903.3 383.7 911.5 380.9C919.7 378.1 935.2 373.4 940.0 371.9" stroke-width="1.5"/>
<path d="M830.0 438.3C830.9 440.4 833.5 448.6 835.6 450.8C837.7 453.0 837.0 453.1 842.5 451.5C848.0 449.9 859.3 444.5 868.9 441.1C878.5 437.8 891.5 433.3 900.0 431.4C908.5 429.5 911.4 430.0 919.6 429.7C927.8 429.4 944.3 429.7 949.3 429.7" stroke-width="1.8"/>
<path d="M842.5 473.1C846.9 472.6 861.0 470.9 868.9 470.3C876.8 469.7 881.5 470.1 890.0 469.7C898.5 469.3 912.2 468.7 919.6 468.2C927.0 467.7 929.5 467.7 934.5 466.7C939.5 465.7 945.6 464.0 949.3 462.3C953.0 460.6 955.5 457.4 956.7 456.4" stroke-width="1.8"/>
<path d="M775.8 330.0C774.4 332.3 769.4 339.3 767.5 343.9C765.6 348.5 764.5 353.2 764.7 357.8C764.9 362.4 766.6 365.9 768.9 371.7C771.2 377.5 775.8 386.5 778.6 392.5C781.4 398.5 782.1 402.5 785.6 407.8C789.1 413.1 794.8 418.8 799.4 424.4C804.0 429.9 810.0 437.2 813.3 441.1C816.5 445.1 817.0 445.3 818.9 448.1C820.8 450.9 821.8 454.6 824.4 457.8C827.0 461.0 831.2 464.9 834.2 467.5C837.2 470.1 841.1 472.2 842.5 473.1" stroke-width="2.0"/>
<path d="M839.7 347.4C837.6 347.7 831.6 347.9 827.2 349.4C822.8 350.9 816.8 352.2 813.3 356.4C809.8 360.6 807.3 369.1 806.4 374.4C805.5 379.7 807.2 384.1 807.8 388.3C808.4 392.5 809.0 395.2 809.9 399.4C810.8 403.6 811.8 408.2 813.3 413.3C814.8 418.4 816.1 425.8 818.9 430.0C821.7 434.2 828.1 436.9 830.0 438.3" stroke-width="1.6"/>
<path d="M962.6 349.6C963.8 350.9 968.0 354.1 970.0 357.1C972.0 360.1 974.0 363.2 974.5 367.4C975.0 371.6 973.0 377.4 973.0 382.3C973.0 387.2 975.0 392.2 974.5 397.1C974.0 402.0 971.7 407.0 970.0 411.9C968.3 416.8 965.6 421.8 964.1 426.7C962.6 431.6 962.3 436.6 961.1 441.5C959.9 446.4 957.4 453.9 956.7 456.4" stroke-width="1.7"/>
<path d="M973.0 379.3L978.9 377.8" stroke-width="1.4"/>
<path d="M962.6 414.9L970.0 408.9" stroke-width="1.4"/>
<path d="M1010.1 324.4C1009.9 325.6 1008.1 327.7 1008.6 331.9C1009.1 336.1 1011.8 343.7 1013.0 349.6C1014.2 355.5 1016.0 361.9 1016.0 367.4C1016.0 372.8 1014.5 377.6 1013.0 382.3C1011.5 387.0 1009.8 390.7 1007.1 395.6C1004.4 400.5 1000.9 406.7 996.7 411.9C992.5 417.1 987.3 422.0 981.9 426.7C976.5 431.4 967.1 437.8 964.1 440.0" stroke-width="1.9"/>
<path d="M740.4 299.3C743.0 300.2 749.8 302.4 755.9 304.5C762.0 306.6 773.2 310.9 776.7 312.2" stroke-width="1.6"/>
<path d="M740.4 312.2C741.7 314.8 746.4 321.4 748.1 327.8C749.8 334.2 749.8 345.8 750.8 350.8C751.8 355.8 752.3 354.4 754.3 357.8C756.3 361.2 761.2 368.8 762.6 371.0" stroke-width="1.6"/>
<path d="M739.7 355.0C740.4 356.9 742.3 362.6 743.9 366.1C745.5 369.6 747.1 373.0 749.4 375.8C751.7 378.6 754.8 381.1 757.8 382.8C760.8 384.6 765.9 385.7 767.5 386.3" stroke-width="1.6"/>
<path d="M739.7 355.0C741.6 356.4 747.0 360.6 750.8 363.3C754.6 366.0 760.6 369.7 762.6 371.0" stroke-width="1.5"/>
<path d="M748.1 389.7C751.3 389.1 762.4 385.8 767.5 386.3C772.6 386.8 776.8 391.5 778.6 392.5" stroke-width="1.5"/>
<path d="M774.4 342.5C773.2 344.4 768.9 349.9 767.5 353.6C766.1 357.3 765.6 361.0 766.1 364.7C766.6 368.4 768.4 371.6 770.3 375.8C772.1 380.0 776.1 387.4 777.2 389.7" stroke-width="1.3"/>
<path d="M803.6 395.3L810.6 400.8" stroke-width="1.3"/>
<path d="M1047.1 321.5C1045.9 324.7 1041.7 334.6 1039.7 340.8C1037.7 347.0 1038.4 353.8 1035.2 358.5C1032.0 363.2 1022.9 367.2 1020.4 368.9" stroke-width="1.6"/>
<path d="M1051.5 346.7C1051.0 347.9 1050.8 350.2 1048.6 354.1C1046.4 358.1 1042.4 365.2 1038.2 370.4C1034.0 375.6 1022.9 382.0 1023.4 385.2C1023.9 388.4 1041.7 389.2 1041.2 389.7C1040.7 390.2 1026.1 387.2 1020.4 388.2C1014.7 389.2 1009.3 394.4 1007.1 395.6" stroke-width="1.6"/>
<path d="M1008.6 331.9C1010.6 333.1 1019.9 337.3 1020.4 339.3C1020.9 341.3 1011.5 341.5 1011.5 343.7C1011.5 345.9 1018.4 349.4 1020.4 352.6C1022.4 355.8 1022.9 361.3 1023.4 363.0" stroke-width="1.4"/>
<path d="M1057.5 346.7C1057.2 350.6 1052.2 368.2 1056.0 370.4C1059.8 372.6 1076.0 361.7 1080.0 360.0" stroke-width="1.8"/>
<path d="M840.2 473.2C839.8 477.6 839.0 491.9 837.8 499.7C836.6 507.5 835.4 513.8 833.0 520.2C830.6 526.6 824.9 535.2 823.3 538.2" stroke-width="1.8"/>
<path d="M943.7 469.6C944.1 473.6 944.9 486.3 946.1 493.7C947.3 501.1 948.1 507.2 950.9 514.2C953.7 521.2 960.9 532.2 962.9 535.8" stroke-width="1.8"/>
<path d="M848.6 473.2C849.6 476.2 851.6 484.9 854.6 491.3C857.6 497.7 863.0 504.5 866.6 511.7C870.2 518.9 873.7 526.6 876.3 534.6C878.9 542.6 879.7 554.3 882.3 559.9C884.9 565.5 890.3 566.9 891.9 568.3" stroke-width="1.6"/>
<path d="M935.2 472.0C933.4 476.0 928.2 489.1 924.4 496.1C920.6 503.1 916.0 507.8 912.4 514.2C908.8 520.6 905.5 526.4 902.7 534.6C899.9 542.8 897.3 557.9 895.5 563.5C893.7 569.1 892.5 567.5 891.9 568.3" stroke-width="1.6"/>
<path d="M851.0 508.1C851.2 512.1 852.6 524.2 852.2 532.2C851.8 540.2 849.2 552.3 848.6 556.3" stroke-width="1.5"/>
<path d="M936.4 491.3C935.0 496.1 929.2 509.4 928.0 520.2C926.8 531.0 929.0 550.3 929.2 556.3" stroke-width="1.5"/>
<path d="M866.6 499.7C870.8 503.5 883.5 522.4 891.9 522.6C900.3 522.8 913.0 504.5 917.2 500.9" stroke-width="1.4"/>
<path d="M882.0 509.0C885.0 508.8 894.1 509.4 900.0 508.0C905.9 506.6 914.3 502.1 917.2 500.9" stroke-width="2.4"/>
<path d="M780.0 559.9C786.0 559.3 800.9 556.5 816.1 556.3C831.4 556.1 858.9 556.7 871.5 558.7C884.1 560.7 888.5 566.7 891.9 568.3" stroke-width="2.0"/>
<path d="M891.9 568.3C894.5 566.7 896.2 560.7 907.6 558.7C919.0 556.7 945.1 556.1 960.5 556.3C975.9 556.5 993.4 559.3 1000.0 559.9" stroke-width="2.0"/>
<path d="M835.4 503.3C831.2 505.5 819.3 511.4 810.1 516.6C800.9 521.8 792.4 528.2 780.0 534.6C767.6 541.0 748.6 549.1 735.5 554.8C722.4 560.4 707.0 566.2 701.3 568.5" stroke-width="2.0"/>
<path d="M948.5 503.3C952.5 505.5 963.9 512.0 972.5 516.6C981.1 521.2 989.7 525.8 1000.0 531.0C1010.3 536.2 1022.2 542.9 1034.2 548.0C1046.2 553.1 1061.0 557.7 1071.8 561.7C1082.6 565.7 1094.7 570.2 1099.3 571.9" stroke-width="2.0"/>
<path d="M735.5 560.0C729.8 560.9 711.6 561.4 701.3 565.1C691.0 568.8 681.9 575.4 673.9 582.2C665.9 589.1 658.1 597.1 653.3 606.2C648.4 615.3 646.5 627.9 644.8 637.0C643.1 646.1 643.0 655.3 643.0 661.0C643.0 666.7 644.5 669.6 644.8 671.3" stroke-width="2.0"/>
<path d="M680.7 589.1C677.9 593.1 667.6 605.0 663.6 613.0C659.6 621.0 657.9 633.0 656.8 637.0" stroke-width="1.6"/>
<path d="M776.7 560.0C772.1 561.4 758.4 563.6 749.3 568.5C740.1 573.4 729.2 581.7 721.8 589.1C714.4 596.5 708.7 605.0 704.7 613.0C700.7 621.0 699.3 630.7 697.9 637.0C696.5 643.3 694.5 646.1 696.2 650.7C697.9 655.3 704.7 659.8 708.1 664.4C711.5 669.0 713.3 670.1 716.7 678.1C720.1 686.1 723.3 699.8 728.7 712.4C734.1 725.0 741.3 744.4 749.3 753.5C757.3 762.6 764.7 764.1 776.7 767.2C788.7 770.4 805.2 771.2 821.2 772.4C837.2 773.5 861.2 774.4 872.6 774.1C884.0 773.8 886.9 771.2 889.7 770.6" stroke-width="1.8"/>
<path d="M776.7 560.0L780.0 559.9" stroke-width="1.8"/>
<path d="M891.4 568.5C891.1 582.8 889.7 621.1 889.7 654.2C889.7 687.3 891.2 731.2 891.4 767.2C891.5 803.2 890.7 836.8 890.6 870.0C890.5 903.2 890.6 950.2 890.6 966.2" stroke-width="1.6"/>
<path d="M828.0 640.5C834.9 641.1 858.9 641.6 869.2 643.9C879.5 646.2 886.3 652.5 889.7 654.2" stroke-width="1.4"/>
<path d="M691.0 655.9C687.0 656.2 674.4 655.6 667.0 657.6C659.6 659.6 652.2 662.2 646.5 667.9C640.8 673.6 637.1 683.2 632.8 691.8C628.5 700.4 623.9 708.4 620.8 719.3C617.6 730.1 615.0 750.6 613.9 756.9" stroke-width="2.0"/>
<path d="M728.7 719.3C726.4 723.9 721.3 737.6 715.0 746.7C708.7 755.8 699.0 766.7 691.0 774.1C683.0 781.5 673.9 786.6 667.0 791.2C660.1 795.8 652.8 799.8 649.9 801.5" stroke-width="1.8"/>
<path d="M643.0 637.0C639.0 639.9 626.5 646.2 619.1 654.2C611.7 662.2 604.8 674.1 598.5 685.0C592.2 695.9 587.1 709.0 581.4 719.3C575.7 729.6 570.0 738.7 564.3 746.7C558.6 754.7 550.5 760.4 547.1 767.2C543.7 774.1 543.1 779.8 543.7 787.8C544.3 795.8 547.2 806.1 550.6 815.2C554.0 824.3 559.8 834.9 564.3 842.6C568.8 850.3 569.0 850.0 577.5 861.2C586.0 872.4 601.2 896.2 615.0 910.0C628.8 923.8 645.0 933.1 660.0 943.7C675.0 954.3 690.9 963.7 705.0 973.7C719.1 983.7 737.8 998.7 744.4 1003.7" stroke-width="2.0"/>
<path d="M615.6 770.6C618.5 772.3 627.6 776.9 632.8 780.9C637.9 784.9 641.9 787.8 646.5 794.6C651.1 801.5 655.6 811.7 660.2 822.0C664.8 832.3 670.2 847.9 673.9 856.3C677.6 864.7 677.3 864.8 682.5 872.5C687.7 880.2 696.2 895.6 705.0 902.5C713.8 909.4 723.8 910.6 735.0 913.7C746.2 916.8 766.2 920.0 772.5 921.2" stroke-width="1.8"/>
<path d="M550.6 743.2L574.5 733.0" stroke-width="1.4"/>
<path d="M540.3 767.2L557.4 750.1" stroke-width="1.4"/>
<path d="M705.0 921.2C704.7 924.3 703.1 932.8 703.1 940.0C703.1 947.2 704.7 960.3 705.0 964.4" stroke-width="1.4"/>
<path d="M709.9 751.8C713.0 756.6 722.1 771.5 728.7 780.9C735.3 790.3 743.0 800.3 749.3 808.3C755.6 816.3 762.5 821.3 766.4 828.9C770.3 836.5 770.2 840.2 772.5 853.7C774.8 867.2 778.8 900.6 780.0 910.0" stroke-width="2.0"/>
<path d="M780.0 910.0C777.5 916.2 770.0 935.0 765.0 947.5C760.0 960.0 754.4 972.5 750.0 985.0C745.6 997.5 740.6 1016.2 738.7 1022.5" stroke-width="2.0"/>
<path d="M749.0 761.0C751.3 765.8 758.2 779.2 763.0 790.0C767.8 800.8 773.0 815.0 778.0 826.0C783.0 837.0 790.5 851.0 793.0 856.0" stroke-width="1.5"/>
<path d="M795.0 829.4C802.5 826.0 824.1 814.7 840.0 808.7C855.9 802.8 875.0 793.7 890.6 793.7C906.2 793.7 919.0 803.1 933.7 808.7C948.4 814.3 971.2 824.4 978.7 827.5" stroke-width="1.8"/>
<path d="M798.7 831.2C799.0 836.8 799.4 853.8 800.6 865.0C801.9 876.2 803.4 886.8 806.2 898.7C809.0 910.6 815.6 930.0 817.5 936.2" stroke-width="1.6"/>
<path d="M978.7 827.5C978.7 833.8 980.0 852.5 978.7 865.0C977.5 877.5 974.3 890.6 971.2 902.5C968.1 914.4 961.9 930.6 960.0 936.2" stroke-width="1.6"/>
<path d="M802.5 865.0C810.0 866.9 832.8 874.6 847.5 876.2C862.2 877.8 876.2 875.0 890.6 874.4C905.0 873.8 919.6 873.8 933.7 872.5C947.8 871.2 968.1 867.8 975.0 866.9" stroke-width="1.6"/>
<path d="M817.5 936.2C821.2 937.8 827.8 943.4 840.0 945.6C852.2 947.8 876.9 949.1 890.6 949.4C904.4 949.7 910.9 949.7 922.5 947.5C934.1 945.3 953.8 938.1 960.0 936.2" stroke-width="1.8"/>
<path d="M890.6 936.2C890.0 938.7 886.9 946.2 886.9 951.2C886.9 956.2 889.4 966.2 890.6 966.2C891.9 966.2 894.4 956.2 894.4 951.2C894.4 946.2 891.2 938.7 890.6 936.2" stroke-width="1.4"/>
<path d="M782.9 906.7C784.6 910.5 789.5 923.4 793.3 929.6C797.1 935.9 802.0 938.7 805.8 944.2C809.6 949.8 814.5 959.8 816.3 962.9" stroke-width="1.6"/>
<path d="M1017.0 561.7C1023.9 561.4 1045.5 558.9 1058.1 560.0C1070.7 561.1 1082.1 564.2 1092.4 568.5C1102.7 572.8 1111.8 578.8 1119.8 585.6C1127.8 592.5 1135.3 601.0 1140.4 609.6C1145.5 618.2 1148.6 629.6 1150.6 637.0C1152.6 644.4 1152.7 647.9 1152.4 654.2C1152.1 660.5 1149.5 671.3 1148.9 674.7" stroke-width="2.0"/>
<path d="M1109.6 584.4C1112.8 587.9 1123.5 598.5 1128.9 605.2C1134.3 611.9 1138.5 617.5 1142.2 624.4C1145.9 631.3 1150.1 638.3 1151.1 646.7C1152.1 655.1 1148.6 670.1 1148.1 674.8" stroke-width="1.5"/>
<path d="M1000.0 560.7C1003.0 561.6 1013.3 563.2 1017.8 565.9C1022.2 568.6 1022.3 573.7 1026.7 577.0C1031.1 580.3 1037.5 580.9 1044.4 585.9C1051.3 590.9 1061.7 599.5 1068.1 606.7C1074.5 613.9 1077.3 619.5 1083.0 628.9C1088.7 638.3 1099.0 657.3 1102.2 663.0" stroke-width="1.8"/>
<path d="M1102.7 664.4C1097.5 667.8 1079.2 677.0 1071.8 685.0C1064.4 693.0 1062.1 703.3 1058.1 712.4C1054.1 721.5 1051.9 731.8 1047.9 739.8C1043.9 747.8 1039.4 755.5 1034.2 760.4C1029.0 765.2 1025.6 766.9 1017.0 768.9C1008.4 770.9 997.1 771.5 982.8 772.4C968.5 773.3 946.2 774.1 931.4 774.1C916.5 774.1 900.0 772.7 893.7 772.4" stroke-width="1.8"/>
<path d="M890.3 657.6C892.6 656.5 897.1 653.0 904.0 650.7C910.9 648.4 920.5 645.6 931.4 643.9C942.2 642.2 962.8 641.1 969.1 640.5" stroke-width="1.4"/>
<path d="M1106.1 662.7C1110.7 663.6 1125.5 664.8 1133.5 667.9C1141.5 671.0 1148.4 675.3 1154.1 681.6C1159.8 687.9 1164.4 695.8 1167.8 705.5C1171.2 715.2 1173.2 732.4 1174.6 739.8C1176.0 747.2 1176.0 748.4 1176.3 750.1" stroke-width="2.0"/>
<path d="M1154.1 637.0C1158.1 641.0 1170.6 651.9 1178.0 661.0C1185.4 670.1 1192.9 681.5 1198.6 691.8C1204.3 702.1 1207.7 713.0 1212.3 722.7C1216.9 732.4 1221.7 741.5 1226.0 750.1C1230.3 758.7 1236.0 770.1 1238.0 774.1" stroke-width="2.0"/>
<path d="M1182.2 749.7C1179.0 752.9 1169.6 760.3 1163.2 768.8C1156.8 777.3 1150.4 789.5 1144.1 800.6C1137.8 811.7 1132.5 822.8 1125.1 835.5C1117.7 848.2 1109.2 864.3 1099.7 876.8C1090.2 889.2 1073.2 904.6 1067.9 910.2" stroke-width="2.0"/>
<path d="M1054.7 726.1C1057.5 730.1 1063.8 742.7 1071.8 750.1C1079.8 757.5 1090.7 762.9 1102.7 770.6C1114.7 778.3 1137.0 792.0 1143.8 796.3" stroke-width="1.8"/>
<path d="M1082.1 760.4C1078.1 763.8 1066.7 772.9 1058.1 780.9C1049.5 788.9 1038.7 799.7 1030.7 808.3C1022.7 816.9 1015.9 824.9 1010.2 832.3C1004.5 839.7 998.8 849.5 996.5 852.9" stroke-width="1.8"/>
<path d="M1023.9 787.8C1022.8 792.4 1019.9 806.6 1017.0 815.2C1014.1 823.8 1009.1 830.1 1006.8 839.2C1004.5 848.3 1004.8 858.2 1003.3 870.0C1001.8 881.8 998.5 903.3 997.5 910.0" stroke-width="1.6"/>
<path d="M979.3 827.2C984.4 822.9 1002.8 808.1 1010.2 801.5C1017.6 794.9 1018.8 793.5 1023.9 787.8C1029.0 782.1 1038.2 770.6 1041.0 767.2" stroke-width="1.4"/>
<path d="M887.4 181.2C884.2 182.2 873.8 184.4 868.2 187.2C862.6 190.0 857.7 194.1 853.7 198.1C849.7 202.1 846.1 206.3 844.1 211.3C842.1 216.3 841.3 221.8 841.7 228.2C842.1 234.6 843.5 243.0 846.5 249.8C849.5 256.6 854.1 263.3 859.7 269.1C865.3 274.9 872.8 280.3 880.2 284.7C887.6 289.1 900.3 293.8 904.3 295.6" stroke-width="2.6"/>
<path d="M887.4 181.2C883.2 182.4 869.3 185.0 862.1 188.4C854.9 191.8 849.1 197.1 844.1 201.7C839.1 206.3 835.0 211.1 832.0 216.1C829.0 221.1 827.0 229.2 826.0 231.8" stroke-width="1.6"/>
<path d="M904.3 295.6C904.3 294.0 903.1 291.2 904.3 286.0C905.5 280.8 907.9 270.3 911.5 264.3C915.1 258.3 920.6 254.8 926.0 249.8C931.4 244.8 941.0 236.8 944.0 234.2" stroke-width="1.8"/>
<path d="M944.0 234.2C943.2 236.4 941.8 242.8 939.2 247.4C936.6 252.0 932.2 257.5 928.4 261.9C924.6 266.3 915.3 272.9 916.3 273.9C917.3 274.9 928.4 270.7 934.4 267.9C940.4 265.1 948.2 261.3 952.4 257.1C956.6 252.9 958.5 248.2 959.7 242.6C960.9 237.0 959.7 226.5 959.7 223.3" stroke-width="1.6"/>
<path d="M959.7 223.3C960.5 224.9 963.7 229.0 964.5 233.0C965.3 237.0 964.5 245.0 964.5 247.4" stroke-width="1.5"/>
<path d="M963.3 218.5C964.5 220.1 969.5 224.6 970.5 228.2C971.5 231.8 970.3 237.0 969.3 240.2C968.3 243.4 965.3 246.2 964.5 247.4" stroke-width="1.4"/>
<path d="M981.3 204.1C980.3 206.5 974.5 214.1 975.3 218.5C976.1 222.9 982.0 225.0 986.1 230.6C990.2 236.2 996.1 246.3 1000.0 252.2C1003.9 258.1 1006.3 258.2 1009.6 265.7C1012.9 273.1 1017.8 289.5 1020.0 296.9C1022.2 304.2 1022.2 307.6 1022.6 309.8" stroke-width="1.5"/>
</g>
</g>
<path d="M58 777.5H1585M58 834.5H1585" stroke="#3ff0f0" stroke-width="1"/>
</svg>
<div class="a" style="left:1603px;top:59px;width:317px;height:981px;background:#3b3b3b;"></div>
<div class="a" style="left:1603px;top:59px;width:317px;height:11px;background:#424242;"></div>
<svg style="left:1628px;top:62px" width="8" height="6"><path d="M3.5 0.5L0.8 3L3.5 5.5M7.5 0.5L4.8 3L7.5 5.5" fill="none" stroke="#e0e0e0" stroke-width="1.1"/></svg>
<svg style="left:1668px;top:62px" width="8" height="6"><path d="M3.5 0.5L0.8 3L3.5 5.5M7.5 0.5L4.8 3L7.5 5.5" fill="none" stroke="#e0e0e0" stroke-width="1.1"/></svg>
<svg style="left:1906px;top:62px" width="8" height="6"><path d="M0.5 0.5L3.2 3L0.5 5.5M4.5 0.5L7.2 3L4.5 5.5" fill="none" stroke="#e0e0e0" stroke-width="1.1"/></svg>
<div class="a" style="left:1604px;top:71px;width:37px;height:376px;background:#535353;"></div>
<div class="a" style="left:1604px;top:448px;width:37px;height:592px;background:#535353;"></div>
<div class="a" style="left:1613px;top:74px;width:18px;height:4px;background:repeating-linear-gradient(90deg,#383838 0 1px,transparent 1px 2px);"></div>
<div class="a" style="left:1644px;top:71px;width:37px;height:40px;background:#535353;"></div>
<div class="a" style="left:1644px;top:112px;width:37px;height:928px;background:#535353;"></div>
<div class="a" style="left:1653px;top:74px;width:18px;height:4px;background:repeating-linear-gradient(90deg,#383838 0 1px,transparent 1px 2px);"></div>
<svg style="left:1652.5px;top:83.0px" width="20" height="20" viewBox="-10 -10 20 20"><path d="M0-7.5L6.5-4V4L0 7.5L-6.5 4V-4Z" fill="none" stroke="#dedede" stroke-width="1.2"/><path d="M-6.5-4L0-0.5L6.5-4M0-0.5V7.5" fill="none" stroke="#dedede" stroke-width="1.2"/><path d="M-6-3.5L-0.5-0.5V7L-6 4Z" fill="#8c8c8c"/></svg>
<svg style="left:1612.5px;top:83.0px" width="20" height="20" viewBox="-10 -10 20 20"><rect x="-6" y="-7.5" width="3.5" height="3.5" fill="none" stroke="#dedede" stroke-width="1"/><rect x="-6" y="-2.5" width="3.5" height="3.5" fill="none" stroke="#dedede" stroke-width="1"/><rect x="-6" y="3" width="3.5" height="4" fill="#dedede"/><path d="M2 6C5 3 5-2 3-6M3-6L0.5-3.5M3-6L5.5-4" fill="none" stroke="#dedede" stroke-width="1.3"/></svg>
<svg style="left:1612.5px;top:111.0px" width="20" height="20" viewBox="-10 -10 20 20"><path d="M-8-4H8M-8 1H8M-8 5.5H8" fill="none" stroke="#dedede" stroke-width="1"/><circle cx="-3" cy="-4" r="1.8" fill="#535353" stroke="#dedede"/><circle cx="3" cy="1" r="1.8" fill="#535353" stroke="#dedede"/><circle cx="-1" cy="5.5" r="1.8" fill="#535353" stroke="#dedede"/></svg>
<svg style="left:1612.5px;top:139.0px" width="20" height="20" viewBox="-10 -10 20 20"><path d="M-6.5-3A8 8 0 1 1 -5.5 5" fill="none" stroke="#dedede" stroke-width="1.3"/><path d="M-8.5-3.5L-6.5 0L-3.5-3Z" fill="#dedede"/><path d="M0-4V1L3 4" fill="none" stroke="#dedede" stroke-width="1.4"/></svg>
<svg style="left:1612.5px;top:167.0px" width="20" height="20" viewBox="-10 -10 20 20"><path d="M-5-7V7L7 0Z" fill="#dedede"/></svg>
<svg style="left:1612.5px;top:195.0px" width="20" height="20" viewBox="-10 -10 20 20"><path d="M-8-7H-6.5M-8-4.5H-6.5M-8-2H-6.5M-5.5-7H-2M-5.5-4.5H-2M-5.5-2H-2" fill="none" stroke="#dedede" stroke-width="1"/><path d="M-1 4L7-5" stroke="#dedede" stroke-width="2.2" stroke-linecap="round"/><path d="M-2 3C-5 3-6 6-7 8C-4 7.5-1.5 7-0.5 5Z" fill="#dedede"/></svg>
<svg style="left:1612.5px;top:223.5px" width="20" height="20" viewBox="-10 -10 20 20"><circle cx="0" cy="0" r="7" fill="none" stroke="#dedede" stroke-width="1.2"/><circle cx="0" cy="-3.5" r="1" fill="#dedede"/><path d="M0-1.5V4.5" fill="none" stroke="#dedede" stroke-width="1.8"/></svg>
<svg style="left:1612.5px;top:251.0px" width="20" height="20" viewBox="-10 -10 20 20"><path d="M-7 6L-2.5-6H-1.5L3 6M-5.3 2H1.3" fill="none" stroke="#dedede" stroke-width="1.3"/><path d="M6-7V8" fill="none" stroke="#dedede" stroke-width="1"/></svg>
<svg style="left:1612.5px;top:279.5px" width="20" height="20" viewBox="-10 -10 20 20"><path d="M1-7H-1.5C-4-7-5.5-5.5-5.5-3.5C-5.5-1.5-4 0-1.5 0H1Z" fill="#dedede"/><path d="M1.5-7V7.5M4.5-7V7.5M1-7H5.5" fill="none" stroke="#dedede" stroke-width="1.4"/></svg>
<svg style="left:1612.5px;top:307.0px" width="20" height="20" viewBox="-10 -10 20 20"><g transform="translate(2 -1) scale(0.85)"><path d="M1-7H-1.5C-4-7-5.5-5.5-5.5-3.5C-5.5-1.5-4 0-1.5 0H1Z" fill="#dedede"/><path d="M1.5-7V7.5M4.5-7V7.5M1-7H5.5" fill="none" stroke="#dedede" stroke-width="1.4"/></g><rect x="-8" y="1" width="4.5" height="4.5" fill="none" stroke="#dedede" stroke-width="1"/><rect x="-5.5" y="3.5" width="4.5" height="4.5" fill="#dedede"/></svg>
<svg style="left:1612.5px;top:335.0px" width="20" height="20" viewBox="-10 -10 20 20"><path d="M-2 5L2.5-7H3.5L8 5M-0.3 1H6.3" fill="none" stroke="#dedede" stroke-width="1.3"/><rect x="-8" y="1" width="4.5" height="4.5" fill="none" stroke="#dedede" stroke-width="1"/><rect x="-5.5" y="3.5" width="4.5" height="4.5" fill="#dedede"/></svg>
<svg style="left:1612.5px;top:363.5px" width="20" height="20" viewBox="-10 -10 20 20"><path d="M-7 7L7-7" stroke="#dedede" stroke-width="2"/><path d="M-5-7C-8-6-8-3-6-2L6 6C6 8 8 8 8 6C8 4 6 4 6 6" fill="none" stroke="#dedede" stroke-width="1.6"/></svg>
<svg style="left:1612.5px;top:391.0px" width="20" height="20" viewBox="-10 -10 20 20"><rect x="-7" y="-5.5" width="11" height="12" fill="none" stroke="#dedede" stroke-width="1.1"/><rect x="-5" y="-7.5" width="11.5" height="12.5" fill="#535353" stroke="#dedede" stroke-width="1.1"/><path d="M1-7.5V-1L2.5-2.5L4-1V-7.5Z" fill="#dedede"/></svg>
<svg style="left:1612.5px;top:419.5px" width="20" height="20" viewBox="-10 -10 20 20"><path d="M-8-7H-6.5M-8-4.5H-6.5M-8-2H-6.5M-5.5-7H-3M-5.5-4.5H-3M-5.5-2H-3" fill="none" stroke="#dedede" stroke-width="1"/><circle cx="2" cy="-4" r="3" fill="#dedede"/><path d="M0.5-2V1H-4V4H8V1H3.5V-2Z" fill="#dedede"/><path d="M-4 6.5H8" fill="none" stroke="#dedede" stroke-width="1.1"/></svg>
<div class="a" style="left:1684px;top:71px;width:236px;height:28px;background:#474747;"></div>
<div class="a" style="left:1684px;top:71px;width:43px;height:28px;background:#474747;border-right:1px solid #3c3c3c"></div>
<div class="a" style="left:1727px;top:71px;width:60px;height:28px;background:#535353;"></div>
<div class="a" style="left:1787px;top:71px;width:65px;height:28px;background:#474747;border-right:1px solid #3c3c3c"></div>
<svg style="left:1904px;top:81px" width="11" height="8"><path d="M0 0.5H11M0 2.5H11M0 4.5H11M0 6.5H11" stroke="#cfcfcf" stroke-width="1"/></svg>
<div class="a" style="left:1684px;top:99px;width:236px;height:66px;background:#535353;"></div>
<svg style="left:1692px;top:115px" width="11" height="11"><circle cx="4.2" cy="4.2" r="3.2" fill="none" stroke="#f0f0f0" stroke-width="1.5"/><path d="M6.5 6.5L10 10" stroke="#f0f0f0" stroke-width="2"/></svg>
<div class="a" style="left:1707px;top:108px;width:204px;height:21px;background:#474747;border:1px solid #3e3e3e"></div>
<div class="a" style="left:1690px;top:138px;width:221px;height:20px;background:#4b4b4b;"></div>
<div class="a" style="left:1692px;top:140px;width:16px;height:16px;background:#000000;"></div>
<div class="a" style="left:1710px;top:140px;width:16px;height:16px;background:#c47b57;"></div>
<div class="a" style="left:1728px;top:140px;width:16px;height:16px;background:#c9aea2;"></div>
<div class="a" style="left:1746px;top:140px;width:16px;height:16px;background:#a08a80;"></div>
<div class="a" style="left:1764px;top:140px;width:16px;height:16px;background:#9a521e;"></div>
<div class="a" style="left:1782px;top:140px;width:16px;height:16px;background:#a9dcef;"></div>
<div class="a" style="left:1800px;top:140px;width:16px;height:16px;background:#ffffff;"></div>
<div class="a" style="left:1818px;top:140px;width:16px;height:16px;background:#7e0c0e;"></div>
<div class="a" style="left:1836px;top:140px;width:16px;height:16px;background:#b8c4cf;"></div>
<div class="a" style="left:1854px;top:140px;width:16px;height:16px;background:#76a9cf;"></div>
<div class="a" style="left:1872px;top:140px;width:16px;height:16px;background:#0d0f14;"></div>
<div class="a" style="left:1890px;top:140px;width:16px;height:16px;background:#a98a7e;"></div>
<div class="a" style="left:1684px;top:165px;width:219px;height:149px;background:#3f3f3f;"></div>
<div class="a" style="left:1686px;top:166px;width:216px;height:28px;background:#454545;"></div>
<svg style="left:1693px;top:175px" width="5" height="10"><path d="M0.8 0.5L4 5L0.8 9.5" fill="none" stroke="#c8c8c8" stroke-width="1"/></svg>
<svg style="left:1705px;top:175px" width="14" height="11"><path d="M0 1.5H5.6000000000000005L7.0 3H14V11H0Z" fill="#d8d8d8"/><path d="M0 3.2H14" stroke="#535353" stroke-width="0.8"/></svg>
<div class="a" style="left:1686px;top:195px;width:216px;height:28px;background:#454545;"></div>
<svg style="left:1693px;top:204px" width="5" height="10"><path d="M0.8 0.5L4 5L0.8 9.5" fill="none" stroke="#c8c8c8" stroke-width="1"/></svg>
<svg style="left:1705px;top:204px" width="14" height="11"><path d="M0 1.5H5.6000000000000005L7.0 3H14V11H0Z" fill="#d8d8d8"/><path d="M0 3.2H14" stroke="#535353" stroke-width="0.8"/></svg>
<div class="a" style="left:1686px;top:224px;width:216px;height:28px;background:#454545;"></div>
<svg style="left:1693px;top:233px" width="5" height="10"><path d="M0.8 0.5L4 5L0.8 9.5" fill="none" stroke="#c8c8c8" stroke-width="1"/></svg>
<svg style="left:1705px;top:233px" width="14" height="11"><path d="M0 1.5H5.6000000000000005L7.0 3H14V11H0Z" fill="#d8d8d8"/><path d="M0 3.2H14" stroke="#535353" stroke-width="0.8"/></svg>
<div class="a" style="left:1686px;top:253px;width:216px;height:28px;background:#6a6a6a;"></div>
<svg style="left:1693px;top:262px" width="5" height="10"><path d="M0.8 0.5L4 5L0.8 9.5" fill="none" stroke="#c8c8c8" stroke-width="1"/></svg>
<svg style="left:1705px;top:262px" width="14" height="11"><path d="M0 1.5H5.6000000000000005L7.0 3H14V11H0Z" fill="#d8d8d8"/><path d="M0 3.2H14" stroke="#535353" stroke-width="0.8"/></svg>
<div class="a" style="left:1686px;top:282px;width:216px;height:28px;background:#454545;"></div>
<svg style="left:1693px;top:291px" width="5" height="10"><path d="M0.8 0.5L4 5L0.8 9.5" fill="none" stroke="#c8c8c8" stroke-width="1"/></svg>
<svg style="left:1705px;top:291px" width="14" height="11"><path d="M0 1.5H5.6000000000000005L7.0 3H14V11H0Z" fill="#d8d8d8"/><path d="M0 3.2H14" stroke="#535353" stroke-width="0.8"/></svg>
<div class="a" style="left:1903px;top:165px;width:17px;height:149px;background:#454545;"></div>
<svg style="left:1907px;top:174px" width="10" height="6"><path d="M0.5 5.5L5 1L9.5 5.5" fill="none" stroke="#8a8a8a" stroke-width="1"/></svg>
<div class="a" style="left:1906px;top:184px;width:11px;height:82px;background:#636363;"></div>
<svg style="left:1908px;top:302px" width="8" height="5"><path d="M0.5 0.5L4 4L7.5 0.5" fill="none" stroke="#8a8a8a" stroke-width="1"/></svg>
<div class="a" style="left:1684px;top:314px;width:236px;height:26px;background:#535353;"></div>
<svg style="left:1822px;top:322px" width="13" height="11"><path d="M0 1.5H5.2L6.5 3H13V11H0Z" fill="#d0d0d0"/><path d="M0 3.2H13" stroke="#535353" stroke-width="0.8"/></svg>
<svg style="left:1852px;top:321px" width="12" height="12"><rect x="0.5" y="0.5" width="11" height="11" fill="none" stroke="#cfcfcf" stroke-width="1"/><path d="M6.0 3V9M3 6.0H9" stroke="#cfcfcf" stroke-width="1"/></svg>
<svg style="left:1880px;top:321px" width="11" height="12"><path d="M0 2H11M3.5 2V0.5H7.5V2" fill="none" stroke="#cfcfcf" stroke-width="1"/><path d="M1.5 3.5H9.5V11.5H1.5Z" fill="none" stroke="#cfcfcf" stroke-width="1"/><path d="M4 5V10M5.5 5V10M7 5V10" stroke="#cfcfcf" stroke-width="0.8"/></svg>
<div class="a" style="left:1684px;top:343px;width:236px;height:27px;background:#474747;"></div>
<div class="a" style="left:1684px;top:343px;width:54px;height:27px;background:#535353;"></div>
<svg style="left:1904px;top:354px" width="11" height="8"><path d="M0 0.5H11M0 2.5H11M0 4.5H11M0 6.5H11" stroke="#cfcfcf" stroke-width="1"/></svg>
<div class="a" style="left:1684px;top:370px;width:236px;height:267px;background:#535353;"></div>
<svg style="left:1787px;top:381px" width="14" height="13"><path d="M3 4.5H8.5C11 4.5 12.5 6 12.5 8S11 11.5 8.5 11.5H5" fill="none" stroke="#9a9a9a" stroke-width="1.3"/><path d="M0.5 4.5L4 1V8Z" fill="#9a9a9a"/></svg>
<div class="a" style="left:1810px;top:379px;width:57px;height:18px;background:#4a4a4a;border:1px solid #5a5a5a"></div>
<div class="a" style="left:1692px;top:406px;width:166px;height:3px;background:#6f6f6f;border-radius:2px"></div>
<div class="a" style="left:1879px;top:389px;width:17px;height:17px;background:#d8d8d8;clip-path:polygon(0 0,60% 0,75% 15%,100% 15%,100% 100%,0 100%)"></div>
<svg style="left:1881px;top:393px" width="13" height="11"><path d="M4 7L11 1" stroke="#333" stroke-width="1.6" stroke-linecap="round"/><path d="M3.5 6.5C2 6.5 1.5 8.5 1 10C2.5 9.8 4 9.5 4.8 8Z" fill="#333"/></svg>
<svg style="left:1689px;top:428px" width="11" height="11"><circle cx="4.2" cy="4.2" r="3.2" fill="none" stroke="#f0f0f0" stroke-width="1.5"/><path d="M6.5 6.5L10 10" stroke="#f0f0f0" stroke-width="2"/></svg>
<div class="a" style="left:1704px;top:425px;width:203px;height:17px;background:#474747;border:1px solid #3e3e3e"></div>
<div class="a" style="left:1684px;top:448px;width:236px;height:33px;background:#474747;"></div>
<div class="a" style="left:1685px;top:449px;width:30px;height:30px;background:#535353;"></div>
<div class="a" style="left:1717px;top:449px;width:30px;height:30px;background:#535353;"></div>
<div class="a" style="left:1749px;top:449px;width:30px;height:30px;background:#535353;"></div>
<div class="a" style="left:1781px;top:449px;width:30px;height:30px;background:#535353;"></div>
<div class="a" style="left:1813px;top:449px;width:30px;height:30px;background:#535353;"></div>
<div class="a" style="left:1845px;top:449px;width:30px;height:30px;background:#535353;"></div>
<div class="a" style="left:1877px;top:449px;width:30px;height:30px;background:#535353;"></div>
<svg style="left:1690px;top:450px" width="24" height="20"><path d="M2 5C3 2 7 1 9 2C11 1 13 3 12 5C14 6 13 9 12 10C13 12 10 14 8 13C6 15 3 14 2 12C0 11 0 8 2 7C1 6 1 5 2 5Z" fill="#f4f4f4"/><path d="M12 9L18 2" stroke="#f4f4f4" stroke-width="1.3"/><path d="M17 1L19 3" stroke="#f4f4f4" stroke-width="1"/></svg>
<svg style="left:1754px;top:450px" width="24" height="20"><path d="M2 5C3 2 7 1 9 2C11 1 13 3 12 5C14 6 13 9 12 10C13 12 10 14 8 13C6 15 3 14 2 12C0 11 0 8 2 7C1 6 1 5 2 5Z" fill="#f4f4f4"/><path d="M12 9L18 2" stroke="#f4f4f4" stroke-width="1.3"/><path d="M17 1L19 3" stroke="#f4f4f4" stroke-width="1"/></svg>
<svg style="left:1786px;top:450px" width="24" height="20"><path d="M2 5C3 2 7 1 9 2C11 1 13 3 12 5C14 6 13 9 12 10C13 12 10 14 8 13C6 15 3 14 2 12C0 11 0 8 2 7C1 6 1 5 2 5Z" fill="#f4f4f4"/><path d="M12 9L18 2" stroke="#f4f4f4" stroke-width="1.3"/><path d="M17 1L19 3" stroke="#f4f4f4" stroke-width="1"/></svg>
<svg style="left:1718px;top:449px" width="30" height="30"><circle cx="14" cy="15.5" r="13.5" fill="#ffffff"/><path d="M19 1H29V11H19Z" fill="#535353"/><path d="M21 9L27 3" stroke="#f0f0f0" stroke-width="1.4"/><path d="M26 2L28 4" stroke="#f0f0f0" stroke-width="1"/></svg>
<svg style="left:1824px;top:452px" width="8" height="6"><ellipse cx="4" cy="3" rx="3.5" ry="2.5" fill="#cfcfcf"/></svg>
<svg style="left:1857px;top:454px" width="6" height="6"><circle cx="3" cy="3" r="2.2" fill="#f0f0f0"/></svg>
<svg style="left:1882px;top:450px" width="24" height="24"><defs><radialGradient id="sg"><stop offset="0" stop-color="#fff"/><stop offset="1" stop-color="#535353" stop-opacity="0"/></radialGradient></defs><circle cx="10.5" cy="15" r="5.5" fill="url(#sg)"/><path d="M16 8L21 3" stroke="#f0f0f0" stroke-width="1.3"/></svg>
<div class="a" style="left:1684px;top:481px;width:219px;height:129px;background:#474747;"></div>
<div class="a" style="left:1685px;top:482px;width:178px;height:25px;background:#535353;"></div>
<div class="a" style="left:1685px;top:509px;width:178px;height:48px;background:#535353;"></div>
<svg style="left:0;top:0px" width="1920" height="1080"><path d="M1697.9 521.9C1705 519.5 1712 517.8 1721 516.9C1730 515.8 1740 514.8 1748.8 515C1758 515.3 1766 516.3 1772.9 517.8C1779 519.2 1783 521 1787.7 522.4C1793 524.2 1798 526 1804.4 527C1815 527.2 1826 524.5 1835.9 523.3C1828 525.5 1816 528 1804.4 528.9C1795 530 1787 530.9 1780.3 530.7C1773 530.3 1768 528.7 1763.6 527C1755 524.5 1748 523 1739.6 522.4C1728 521.6 1720 521.3 1711.8 521.5C1706 521.7 1701 522 1697.9 521.9Z" fill="#ffffff"/></svg>
<svg style="left:1851px;top:512px" width="12" height="12"><path d="M4.5 7.5L11 1" stroke="#e6e6e6" stroke-width="1.6" stroke-linecap="round"/><path d="M4 7C2 7 1.5 9.5 0.8 11.2C2.5 11 4.5 10.3 5 8.5Z" fill="#e6e6e6"/></svg>
<div class="a" style="left:1685px;top:559px;width:178px;height:48px;background:#535353;"></div>
<svg style="left:0;top:50px" width="1920" height="1080"><path d="M1697.9 521.9C1705 519.5 1712 517.8 1721 516.9C1730 515.8 1740 514.8 1748.8 515C1758 515.3 1766 516.3 1772.9 517.8C1779 519.2 1783 521 1787.7 522.4C1793 524.2 1798 526 1804.4 527C1815 527.2 1826 524.5 1835.9 523.3C1828 525.5 1816 528 1804.4 528.9C1795 530 1787 530.9 1780.3 530.7C1773 530.3 1768 528.7 1763.6 527C1755 524.5 1748 523 1739.6 522.4C1728 521.6 1720 521.3 1711.8 521.5C1706 521.7 1701 522 1697.9 521.9Z" fill="#ffffff"/></svg>
<svg style="left:1851px;top:562px" width="12" height="12"><path d="M4.5 7.5L11 1" stroke="#e6e6e6" stroke-width="1.6" stroke-linecap="round"/><path d="M4 7C2 7 1.5 9.5 0.8 11.2C2.5 11 4.5 10.3 5 8.5Z" fill="#e6e6e6"/></svg>
<div class="a" style="left:1903px;top:481px;width:17px;height:129px;background:#474747;"></div>
<div class="a" style="left:1852px;top:482px;width:9px;height:3px;background:#0a0a0a;"></div>
<svg style="left:1907px;top:489px" width="10" height="6"><path d="M0.5 5.5L5 1L9.5 5.5" fill="none" stroke="#8a8a8a" stroke-width="1"/></svg>
<div class="a" style="left:1905px;top:570px;width:12px;height:10px;background:#5e5e5e;"></div>
<svg style="left:1908px;top:598px" width="8" height="5"><path d="M0.5 0.5L4 4L7.5 0.5" fill="none" stroke="#8a8a8a" stroke-width="1"/></svg>
<div class="a" style="left:1684px;top:610px;width:236px;height:27px;background:#535353;"></div>
<div class="a" style="left:1692px;top:617px;width:76px;height:3px;background:#6f6f6f;"></div>
<svg style="left:1707px;top:619px" width="13" height="12"><path d="M6.5 1C8 1 12 8 12 10C12 11 11 11.5 10 11.5H3C2 11.5 1 11 1 10C1 8 5 1 6.5 1Z" fill="#f0f0f0"/></svg>
<svg style="left:1821px;top:617px" width="13" height="11"><path d="M0 1.5H5.2L6.5 3H13V11H0Z" fill="#d0d0d0"/><path d="M0 3.2H13" stroke="#535353" stroke-width="0.8"/></svg>
<svg style="left:1851px;top:617px" width="12" height="12"><rect x="0.5" y="0.5" width="11" height="11" fill="none" stroke="#9a9a9a" stroke-width="1"/><path d="M6.0 3V9M3 6.0H9" stroke="#9a9a9a" stroke-width="1"/></svg>
<svg style="left:1879px;top:617px" width="11" height="12"><path d="M0 2H11M3.5 2V0.5H7.5V2" fill="none" stroke="#9a9a9a" stroke-width="1"/><path d="M1.5 3.5H9.5V11.5H1.5Z" fill="none" stroke="#9a9a9a" stroke-width="1"/><path d="M4 5V10M5.5 5V10M7 5V10" stroke="#9a9a9a" stroke-width="0.8"/></svg>
<div class="a" style="left:1684px;top:640px;width:236px;height:27px;background:#474747;"></div>
<div class="a" style="left:1684px;top:640px;width:47px;height:27px;background:#535353;"></div>
<div class="a" style="left:1731px;top:640px;width:59px;height:27px;background:#474747;border-right:1px solid #3c3c3c"></div>
<div class="a" style="left:1790px;top:640px;width:44px;height:27px;background:#474747;border-right:1px solid #3c3c3c"></div>
<svg style="left:1903px;top:649px" width="11" height="8"><path d="M0 0.5H11M0 2.5H11M0 4.5H11M0 6.5H11" stroke="#cfcfcf" stroke-width="1"/></svg>
<div class="a" style="left:1684px;top:667px;width:236px;height:90px;background:#535353;"></div>
<div class="a" style="left:1684px;top:698px;width:236px;height:1px;background:#474747;"></div>
<div class="a" style="left:1684px;top:726px;width:236px;height:1px;background:#474747;"></div>
<div class="a" style="left:1688px;top:676px;width:87px;height:20px;background:#474747;border:1px solid #3a3a3a;border-radius:2px"></div>
<svg style="left:1696px;top:681px" width="11" height="11"><circle cx="4.2" cy="4.2" r="3.3" fill="none" stroke="#e6e6e6" stroke-width="1.4"/><path d="M6.5 6.5L10 10" stroke="#e6e6e6" stroke-width="1.8"/></svg>
<svg style="left:1765px;top:684px" width="8" height="5"><path d="M0.5 0.5L4 4L7.5 0.5" fill="none" stroke="#cfcfcf" stroke-width="1"/></svg>
<svg style="left:1786px;top:678px" width="12" height="11"><rect x="0.5" y="0.5" width="11" height="10" fill="none" stroke="#d8d8d8" stroke-width="1"/><path d="M2 8L5 4L7 6L8 5L10 8Z" fill="#d8d8d8"/></svg>
<svg style="left:1810px;top:679px" width="12" height="12"><circle cx="6" cy="6" r="5" fill="none" stroke="#d8d8d8" stroke-width="1.2"/><path d="M6 1A5 5 0 0 0 6 11Z" fill="#d8d8d8"/></svg>
<svg style="left:1835px;top:679px" width="11" height="11"><path d="M0.5 2.5V0.7H10.5V2.5M5.5 0.7V10.3M3 10.3H8" fill="none" stroke="#d8d8d8" stroke-width="1.5"/></svg>
<svg style="left:1859px;top:679px" width="12" height="12"><rect x="2" y="2" width="8" height="8" fill="none" stroke="#d8d8d8" stroke-width="1"/><rect x="0.5" y="0.5" width="3" height="3" fill="#d8d8d8"/><rect x="8.5" y="0.5" width="3" height="3" fill="#d8d8d8"/><rect x="0.5" y="8.5" width="3" height="3" fill="#d8d8d8"/><rect x="8.5" y="8.5" width="3" height="3" fill="#d8d8d8"/></svg>
<svg style="left:1884px;top:678px" width="11" height="13"><path d="M0.5 4.5V12.5H10.5V0.5H4.5Z" fill="#d8d8d8"/><path d="M3 7V10H6" fill="none" stroke="#535353" stroke-width="1"/></svg>
<div class="a" style="left:1908px;top:676px;width:9px;height:19px;background:#d8d8d8;border-radius:5px;background:linear-gradient(#f0f0f0 0 45%,#474747 45%)"></div>
<div class="a" style="left:1688px;top:704px;width:128px;height:20px;background:#474747;border:1px solid #3a3a3a;border-radius:2px"></div>
<svg style="left:1805px;top:712px" width="8" height="5"><path d="M0.5 0.5L4 4L7.5 0.5" fill="none" stroke="#cfcfcf" stroke-width="1"/></svg>
<div class="a" style="left:1864px;top:705px;width:35px;height:18px;background:#474747;border:1px solid #3a3a3a"></div>
<div class="a" style="left:1899px;top:705px;width:18px;height:18px;background:#474747;border:1px solid #3a3a3a"></div>
<svg style="left:1904px;top:712px" width="8" height="5"><path d="M0.5 0.5L4 4L7.5 0.5" fill="none" stroke="#cfcfcf" stroke-width="1"/></svg>
<svg style="left:1722px;top:735px" width="12" height="12"><rect x="0.5" y="0.5" width="11" height="11" fill="none" stroke="#d8d8d8"/><rect x="2" y="2" width="3" height="3" fill="#d8d8d8"/><rect x="7" y="2" width="3" height="3" fill="#d8d8d8"/><rect x="4.5" y="4.5" width="3" height="3" fill="#d8d8d8"/><rect x="2" y="7" width="3" height="3" fill="#d8d8d8"/><rect x="7" y="7" width="3" height="3" fill="#d8d8d8"/></svg>
<svg style="left:1744px;top:735px" width="13" height="13"><path d="M5 8L12 1" stroke="#d8d8d8" stroke-width="1.8" stroke-linecap="round"/><path d="M4.5 7.5C2.5 7.5 1.5 10 0.5 12.5C3 12 5 11 5.8 9Z" fill="#d8d8d8"/></svg>
<svg style="left:1765px;top:734px" width="14" height="14"><path d="M7 1V13M1 7H13" stroke="#d8d8d8" stroke-width="1.2"/><path d="M7 0L4.5 3H9.5ZM7 14L4.5 11H9.5ZM0 7L3 4.5V9.5ZM14 7L11 4.5V9.5Z" fill="#d8d8d8"/></svg>
<svg style="left:1788px;top:735px" width="14" height="13"><path d="M0 3H11V12M3 0V10H14" fill="none" stroke="#d8d8d8" stroke-width="1.1"/><path d="M3 3L11 10" stroke="#d8d8d8" stroke-dasharray="1.5 1.5"/></svg>
<svg style="left:1811px;top:734px" width="11" height="13"><path d="M2.5 6V4A3 3 0 0 1 8.5 4V6" fill="none" stroke="#d8d8d8" stroke-width="1.5"/><rect x="0.5" y="6" width="10" height="7" fill="#d8d8d8"/></svg>
<div class="a" style="left:1864px;top:733px;width:35px;height:18px;background:#474747;border:1px solid #3a3a3a"></div>
<div class="a" style="left:1899px;top:733px;width:18px;height:18px;background:#474747;border:1px solid #3a3a3a"></div>
<svg style="left:1904px;top:740px" width="8" height="5"><path d="M0.5 0.5L4 4L7.5 0.5" fill="none" stroke="#cfcfcf" stroke-width="1"/></svg>
<div class="a" style="left:1684px;top:757px;width:236px;height:258px;background:#535353;"></div>
<div class="a" style="left:1714px;top:757px;width:189px;height:37px;background:#6a6a6a;"></div>
<div class="a" style="left:1684px;top:794px;width:219px;height:1px;background:#424242;"></div>
<svg style="left:1692px;top:771px" width="14" height="10"><path d="M0.3 5C2.5 0.6 11.5 0.6 13.7 5C11.5 9.4 2.5 9.4 0.3 5Z" fill="#dcdcdc"/><circle cx="7" cy="5" r="3" fill="#535353"/><circle cx="7" cy="5" r="1.8" fill="#dcdcdc"/></svg>
<div class="a" style="left:1718px;top:760px;width:32px;height:31px;background:#ffffff;border:1px solid #262626;background-image:linear-gradient(45deg,#cdcdcd 25%,transparent 25%,transparent 75%,#cdcdcd 75%),linear-gradient(45deg,#cdcdcd 25%,transparent 25%,transparent 75%,#cdcdcd 75%);background-size:8px 8px;background-position:0 0,4px 4px"></div>
<svg style="left:1716px;top:758px" width="36" height="35"><path d="M0.5 7V0.5H7M29 0.5H35.5V7M35.5 28V34.5H29M7 34.5H0.5V28" fill="none" stroke="#ffffff" stroke-width="1.5"/></svg>
<div class="a" style="left:1714px;top:795px;width:1px;height:75px;background:#474747;"></div>
<svg style="left:1692px;top:809px" width="14" height="10"><path d="M0.3 5C2.5 0.6 11.5 0.6 13.7 5C11.5 9.4 2.5 9.4 0.3 5Z" fill="#dcdcdc"/><circle cx="7" cy="5" r="3" fill="#535353"/><circle cx="7" cy="5" r="1.8" fill="#dcdcdc"/></svg>
<div class="a" style="left:1718px;top:797px;width:32px;height:31px;background:#ffffff;border:1px solid #262626;background-image:linear-gradient(45deg,#cdcdcd 25%,transparent 25%,transparent 75%,#cdcdcd 75%),linear-gradient(45deg,#cdcdcd 25%,transparent 25%,transparent 75%,#cdcdcd 75%);background-size:8px 8px;background-position:0 0,4px 4px"></div>
<div class="a" style="left:1893px;top:795px;width:10px;height:38px;background:#474747;"></div>
<svg style="left:1893px;top:811px" width="10" height="6"><path d="M0.5 5.5L5 1L9.5 5.5" fill="none" stroke="#cfcfcf" stroke-width="1"/></svg>
<svg style="left:1734px;top:836px" width="14" height="10"><path d="M0.3 5C2.5 0.6 11.5 0.6 13.7 5C11.5 9.4 2.5 9.4 0.3 5Z" fill="#dcdcdc"/><circle cx="7" cy="5" r="3" fill="#535353"/><circle cx="7" cy="5" r="1.8" fill="#dcdcdc"/></svg>
<svg style="left:1751px;top:855px" width="14" height="10"><path d="M0.3 5C2.5 0.6 11.5 0.6 13.7 5C11.5 9.4 2.5 9.4 0.3 5Z" fill="#dcdcdc"/><circle cx="7" cy="5" r="3" fill="#535353"/><circle cx="7" cy="5" r="1.8" fill="#dcdcdc"/></svg>
<div class="a" style="left:1684px;top:869px;width:219px;height:1px;background:#424242;"></div>
<div class="a" style="left:1714px;top:870px;width:1px;height:37px;background:#474747;"></div>
<svg style="left:1692px;top:885px" width="14" height="10"><path d="M0.3 5C2.5 0.6 11.5 0.6 13.7 5C11.5 9.4 2.5 9.4 0.3 5Z" fill="#dcdcdc"/><circle cx="7" cy="5" r="3" fill="#535353"/><circle cx="7" cy="5" r="1.8" fill="#dcdcdc"/></svg>
<div class="a" style="left:1718px;top:875px;width:32px;height:31px;background:#ffffff;border:1px solid #262626;background-image:linear-gradient(45deg,#cdcdcd 25%,transparent 25%,transparent 75%,#cdcdcd 75%),linear-gradient(45deg,#cdcdcd 25%,transparent 25%,transparent 75%,#cdcdcd 75%);background-size:8px 8px;background-position:0 0,4px 4px"></div>
<div class="a" style="left:1684px;top:907px;width:219px;height:1px;background:#424242;"></div>
<div class="a" style="left:1714px;top:908px;width:1px;height:37px;background:#474747;"></div>
<svg style="left:1692px;top:923px" width="14" height="10"><path d="M0.3 5C2.5 0.6 11.5 0.6 13.7 5C11.5 9.4 2.5 9.4 0.3 5Z" fill="#dcdcdc"/><circle cx="7" cy="5" r="3" fill="#535353"/><circle cx="7" cy="5" r="1.8" fill="#dcdcdc"/></svg>
<div class="a" style="left:1718px;top:913px;width:32px;height:31px;background:#ffffff;border:1px solid #262626;background-image:linear-gradient(45deg,#cdcdcd 25%,transparent 25%,transparent 75%,#cdcdcd 75%),linear-gradient(45deg,#cdcdcd 25%,transparent 25%,transparent 75%,#cdcdcd 75%);background-size:8px 8px;background-position:0 0,4px 4px"></div>
<div class="a" style="left:1684px;top:945px;width:219px;height:1px;background:#424242;"></div>
<div class="a" style="left:1714px;top:946px;width:1px;height:37px;background:#474747;"></div>
<svg style="left:1692px;top:961px" width="14" height="10"><path d="M0.3 5C2.5 0.6 11.5 0.6 13.7 5C11.5 9.4 2.5 9.4 0.3 5Z" fill="#dcdcdc"/><circle cx="7" cy="5" r="3" fill="#535353"/><circle cx="7" cy="5" r="1.8" fill="#dcdcdc"/></svg>
<div class="a" style="left:1718px;top:951px;width:32px;height:31px;background:#ffffff;border:1px solid #262626;background-image:linear-gradient(45deg,#cdcdcd 25%,transparent 25%,transparent 75%,#cdcdcd 75%),linear-gradient(45deg,#cdcdcd 25%,transparent 25%,transparent 75%,#cdcdcd 75%);background-size:8px 8px;background-position:0 0,4px 4px"></div>
<div class="a" style="left:1684px;top:983px;width:219px;height:1px;background:#424242;"></div>
<div class="a" style="left:1714px;top:984px;width:1px;height:37px;background:#474747;"></div>
<svg style="left:1692px;top:999px" width="14" height="10"><path d="M0.3 5C2.5 0.6 11.5 0.6 13.7 5C11.5 9.4 2.5 9.4 0.3 5Z" fill="#dcdcdc"/><circle cx="7" cy="5" r="3" fill="#535353"/><circle cx="7" cy="5" r="1.8" fill="#dcdcdc"/></svg>
<div class="a" style="left:1718px;top:989px;width:32px;height:31px;background:#ffffff;border:1px solid #262626;background-image:linear-gradient(45deg,#cdcdcd 25%,transparent 25%,transparent 75%,#cdcdcd 75%),linear-gradient(45deg,#cdcdcd 25%,transparent 25%,transparent 75%,#cdcdcd 75%);background-size:8px 8px;background-position:0 0,4px 4px"></div>
<div class="a" style="left:1684px;top:1021px;width:219px;height:1px;background:#424242;"></div>
<div class="a" style="left:1903px;top:757px;width:17px;height:258px;background:#474747;"></div>
<svg style="left:1907px;top:764px" width="10" height="6"><path d="M0.5 5.5L5 1L9.5 5.5" fill="none" stroke="#8a8a8a" stroke-width="1"/></svg>
<div class="a" style="left:1906px;top:844px;width:11px;height:120px;background:#636363;"></div>
<svg style="left:1908px;top:1001px" width="8" height="5"><path d="M0.5 0.5L4 4L7.5 0.5" fill="none" stroke="#8a8a8a" stroke-width="1"/></svg>
<div class="a" style="left:1684px;top:1015px;width:236px;height:25px;background:#535353;"></div>
<svg style="left:1717px;top:1022px" width="13" height="8"><path d="M5 1H3A2.5 2.5 0 0 0 3 7H5M8 1H10A2.5 2.5 0 0 1 10 7H8M4 4H9" fill="none" stroke="#8a8a8a" stroke-width="1.1"/></svg>
<svg style="left:1771px;top:1021px" width="13" height="10"><rect x="0" y="0" width="13" height="10" fill="#d8d8d8"/><circle cx="6.5" cy="5" r="3" fill="#535353"/></svg>
<svg style="left:1799px;top:1020px" width="13" height="13"><circle cx="6" cy="6" r="5" fill="none" stroke="#d8d8d8" stroke-width="1.2"/><path d="M6 1A5 5 0 0 0 6 11Z" fill="#d8d8d8"/></svg>
<svg style="left:1826px;top:1020px" width="13" height="11"><path d="M0 1.5H5.2L6.5 3H13V11H0Z" fill="#d0d0d0"/><path d="M0 3.2H13" stroke="#535353" stroke-width="0.8"/></svg>
<svg style="left:1853px;top:1020px" width="12" height="12"><rect x="0.5" y="0.5" width="11" height="11" fill="none" stroke="#cfcfcf" stroke-width="1"/><path d="M6.0 3V9M3 6.0H9" stroke="#cfcfcf" stroke-width="1"/></svg>
<svg style="left:1880px;top:1020px" width="11" height="12"><path d="M0 2H11M3.5 2V0.5H7.5V2" fill="none" stroke="#cfcfcf" stroke-width="1"/><path d="M1.5 3.5H9.5V11.5H1.5Z" fill="none" stroke="#cfcfcf" stroke-width="1"/><path d="M4 5V10M5.5 5V10M7 5V10" stroke="#cfcfcf" stroke-width="0.8"/></svg>
<div class="a" style="left:0px;top:1040px;width:1920px;height:40px;background:#eeeeee;"></div>
<svg style="left:16px;top:1052px" width="17" height="17"><path d="M0 2.3L6.8 1.3V7.8H0ZM7.8 1.2L16.5 0V7.8H7.8ZM0 8.8H6.8V15.3L0 14.3ZM7.8 8.8H16.5V16.5L7.8 15.3Z" fill="#111"/></svg>
<div class="a" style="left:48px;top:1040px;width:288px;height:40px;background:#ffffff;border-left:1px solid #d8d8d8;border-right:1px solid #d8d8d8;border-bottom:1px solid #d8d8d8"></div>
<svg style="left:59px;top:1051px" width="17" height="17"><circle cx="10.5" cy="6.5" r="5.5" fill="none" stroke="#111" stroke-width="1.2"/><path d="M6.5 10.5L1 16" stroke="#111" stroke-width="1.4"/></svg>
<svg style="left:347.0px;top:1047.0px" width="26" height="26" viewBox="-13 -13 26 26"><rect x="-7" y="-6" width="10" height="11" fill="none" stroke="#111" stroke-width="1.3"/><path d="M-9-8H5M-9 7H5" stroke="#111" stroke-width="1.3"/><rect x="6" y="-6" width="2.5" height="3" fill="#111"/><rect x="6" y="-1" width="2.5" height="3" fill="#111"/></svg>
<div class="a" style="left:391px;top:1078px;width:40px;height:2px;background:#0a73c9;"></div>
<div class="a" style="left:440px;top:1078px;width:40px;height:2px;background:#0a73c9;"></div>
<div class="a" style="left:587px;top:1078px;width:40px;height:2px;background:#0a73c9;"></div>
<div class="a" style="left:636px;top:1078px;width:40px;height:2px;background:#0a73c9;"></div>
<div class="a" style="left:685px;top:1078px;width:40px;height:2px;background:#0a73c9;"></div>
<div class="a" style="left:730px;top:1078px;width:48px;height:2px;background:#0a73c9;"></div>
<div class="a" style="left:832px;top:1078px;width:40px;height:2px;background:#0a73c9;"></div>
<div class="a" style="left:881px;top:1078px;width:40px;height:2px;background:#0a73c9;"></div>
<div class="a" style="left:930px;top:1078px;width:40px;height:2px;background:#0a73c9;"></div>
<div class="a" style="left:979px;top:1078px;width:40px;height:2px;background:#0a73c9;"></div>
<div class="a" style="left:1028px;top:1078px;width:40px;height:2px;background:#0a73c9;"></div>
<div class="a" style="left:1077px;top:1078px;width:40px;height:2px;background:#0a73c9;"></div>
<div class="a" style="left:1126px;top:1078px;width:40px;height:2px;background:#0a73c9;"></div>
<div class="a" style="left:1175px;top:1078px;width:40px;height:2px;background:#0a73c9;"></div>
<div class="a" style="left:1224px;top:1078px;width:40px;height:2px;background:#0a73c9;"></div>
<div class="a" style="left:779px;top:1040px;width:49px;height:40px;background:#f9b48e;"></div>
<div class="a" style="left:779px;top:1078px;width:49px;height:2px;background:#f07a2c;"></div>
<div class="a" style="left:730px;top:1040px;width:49px;height:38px;background:#f6f6f6;"></div>
<svg style="left:397.5px;top:1047.0px" width="26" height="26" viewBox="-13 -13 26 26"><path d="M-11-8H-3L-1-6H11V9H-11Z" fill="#e8a92d"/><path d="M-11-4H11V9H-11Z" fill="#f6c84a"/><path d="M-4 2H4V9H1V5H-1V9H-4Z" fill="#1b78c8"/><path d="M-6 1H6V3H-6Z" fill="#1b78c8"/></svg>
<svg style="left:447.0px;top:1047.0px" width="26" height="26" viewBox="-13 -13 26 26"><defs><linearGradient id="eg" x1="0" y1="0" x2="1" y2="1"><stop offset="0" stop-color="#36c3a5"/><stop offset="0.6" stop-color="#1a8fd8"/><stop offset="1" stop-color="#0b5fb0"/></linearGradient></defs><circle cx="0" cy="0" r="11.5" fill="url(#eg)"/><path d="M-11 2C-10-6 3-8 6-2C7 1 3 3-1 2C-4 1-3 6 2 8C6 9 9 7 11 4C9 11-1 13-6 9C-10 6-11 4-11 2Z" fill="#eeeeee"/><path d="M-3 3C-3 6 1 8 5 7" fill="none" stroke="#2aa3e0" stroke-width="2"/></svg>
<svg style="left:495.0px;top:1047.0px" width="26" height="26" viewBox="-13 -13 26 26"><path d="M-10-5H10V10H-10Z" fill="#1c5ca8"/><path d="M-5-5V-9H5V-5" fill="none" stroke="#37a3e8" stroke-width="1.8"/><rect x="-5" y="-1" width="4.5" height="4.5" fill="#f25022"/><rect x="0.5" y="-1" width="4.5" height="4.5" fill="#7fba00"/><rect x="-5" y="4" width="4.5" height="4.5" fill="#00a4ef"/><rect x="0.5" y="4" width="4.5" height="4.5" fill="#ffb900"/></svg>
<svg style="left:544.0px;top:1047.0px" width="26" height="26" viewBox="-13 -13 26 26"><path d="M-3-10H11V8H-3Z" fill="#1a7fd4"/><path d="M-3-2L11 6V11H-3Z" fill="#0e5eb4"/><rect x="-11" y="-5" width="12" height="11" fill="#0f6cbd"/><circle cx="-5" cy="0.5" r="3.3" fill="none" stroke="#fff" stroke-width="1.6"/><rect x="-1" y="5" width="13" height="6" fill="#0c4a8a"/><text x="5.5" y="10" font-size="5.5" font-family="Liberation Sans" font-weight="bold" fill="#6ff0c8" text-anchor="middle">NEW</text></svg>
<svg style="left:594.0px;top:1047.0px" width="26" height="26" viewBox="-13 -13 26 26"><circle cx="0" cy="0" r="11.5" fill="#db4437"/><path d="M0 0L-10 5.8A11.5 11.5 0 0 1 0 -11.5H11Z" fill="#db4437"/><path d="M0 0L10 -5.8A11.5 11.5 0 0 1 0 11.5Z" fill="#f4c20d"/><path d="M0 0L0 11.5A11.5 11.5 0 0 1 -10 -5.8Z" fill="#0f9d58"/><circle cx="0" cy="0" r="5" fill="#fff"/><circle cx="0" cy="0" r="4" fill="#4285f4"/><circle cx="5" cy="5" r="6.5" fill="#44576a"/><circle cx="5" cy="4.5" r="4" fill="#b9c8d6"/></svg>
<svg style="left:642.5px;top:1047.0px" width="26" height="26" viewBox="-13 -13 26 26"><circle cx="0" cy="0" r="12" fill="#ffffff"/><path d="M-7-5L-4 6L0-2L4 6L7-5" fill="none" stroke="#2aa8e6" stroke-width="2.4" stroke-linejoin="round"/></svg>
<svg style="left:691.5px;top:1047.0px" width="26" height="26" viewBox="-13 -13 26 26"><defs><linearGradient id="cc" x1="0" y1="0" x2="1" y2="1"><stop offset="0" stop-color="#ff3d6e"/><stop offset="0.5" stop-color="#c63ed6"/><stop offset="1" stop-color="#ffb12a"/></linearGradient></defs><rect x="-11" y="-11" width="22" height="22" rx="5" fill="url(#cc)"/><path d="M-6 4C-9 4-9-2-5-2C-4-6 3-6 4-2C8-2 8 4 5 4Z" fill="none" stroke="#fff" stroke-width="1.8"/></svg>
<svg style="left:740.5px;top:1047.0px" width="26" height="26" viewBox="-13 -13 26 26"><rect x="-11.5" y="-11" width="23" height="22" rx="4" fill="#001e36"/><text x="0" y="5" font-size="12" font-family="Liberation Sans" font-weight="bold" fill="#31a8ff" text-anchor="middle">Ps</text></svg>
<svg style="left:790.0px;top:1047.0px" width="26" height="26" viewBox="-13 -13 26 26"><rect x="-11.5" y="-11.5" width="23" height="23" rx="4" fill="#fce43f"/><circle cx="0" cy="1" r="6.5" fill="none" stroke="#222" stroke-width="2.2"/><path d="M-3 1L-0.5 3.5L6-4" fill="none" stroke="#222" stroke-width="2.2"/></svg>
<svg style="left:838.5px;top:1047.0px" width="26" height="26" viewBox="-13 -13 26 26"><rect x="-11" y="-11" width="22" height="22" rx="4" fill="#b30b00"/><path d="M-6 7C-2 1 1-7 0-8C-1-9-2-4 1 1C3 4 6 5 7 4C8 2 2 2-6 7Z" fill="none" stroke="#fff" stroke-width="1.6"/></svg>
<svg style="left:887.5px;top:1047.0px" width="26" height="26" viewBox="-13 -13 26 26"><defs><linearGradient id="st" x1="0" y1="0" x2="0" y2="1"><stop offset="0" stop-color="#1b2838"/><stop offset="1" stop-color="#1565a8"/></linearGradient></defs><circle cx="0" cy="0" r="11.5" fill="url(#st)"/><circle cx="4" cy="-3" r="4" fill="none" stroke="#fff" stroke-width="1.8"/><path d="M-11 2L-4 5L2-1" fill="none" stroke="#fff" stroke-width="2.2"/><circle cx="-4" cy="5" r="2.5" fill="#fff"/></svg>
<svg style="left:936.5px;top:1047.0px" width="26" height="26" viewBox="-13 -13 26 26"><rect x="-6" y="-11" width="17" height="22" rx="1.5" fill="#2b7cd3"/><rect x="-6" y="-3" width="17" height="7" fill="#185abd"/><rect x="-6" y="4" width="17" height="7" fill="#103f91"/><rect x="-12" y="-6" width="11" height="11" fill="#185abd"/><text x="-6.5" y="3.5" font-size="9" font-family="Liberation Sans" font-weight="bold" fill="#fff" text-anchor="middle">W</text></svg>
<svg style="left:985.5px;top:1047.0px" width="26" height="26" viewBox="-13 -13 26 26"><rect x="-9" y="-12" width="18" height="24" rx="1.5" fill="#5d6b78"/><rect x="-7" y="-10" width="14" height="4" fill="#6fd3f5"/><g fill="#d9e4ee"><rect x="-7" y="-4" width="4" height="3.5"/><rect x="-2" y="-4" width="4" height="3.5"/><rect x="3" y="-4" width="4" height="3.5"/><rect x="-7" y="1" width="4" height="3.5"/><rect x="-2" y="1" width="4" height="3.5"/><rect x="-7" y="6" width="4" height="3.5"/><rect x="-2" y="6" width="4" height="3.5"/></g><rect x="3" y="1" width="4" height="8.5" fill="#2a6ab8"/></svg>
<svg style="left:1035.0px;top:1047.0px" width="26" height="26" viewBox="-13 -13 26 26"><defs><linearGradient id="ph" x1="0" y1="0" x2="0" y2="1"><stop offset="0" stop-color="#2a86e0"/><stop offset="1" stop-color="#0d5fc0"/></linearGradient></defs><rect x="-11" y="-11" width="22" height="22" rx="3.5" fill="url(#ph)"/><path d="M-11 11V5L-3-4L6 5L11 2V11Z" fill="#5fd0f5"/><path d="M-11 11L-2 3L6 11Z" fill="#a6ecfb"/><circle cx="5" cy="-5" r="2.3" fill="#fff"/></svg>
<svg style="left:1083.5px;top:1047.0px" width="26" height="26" viewBox="-13 -13 26 26"><rect x="-11.5" y="-11.5" width="23" height="23" rx="5" fill="#f4f4f4" stroke="#dcdcdc"/><path d="M-2-5C-8-5-9 3-4 3H2M2 5C8 5 9-3 4-3H-2" fill="none" stroke="#8a8a8a" stroke-width="2.6"/></svg>
<svg style="left:1132.5px;top:1047.0px" width="26" height="26" viewBox="-13 -13 26 26"><rect x="-11.5" y="-11.5" width="23" height="23" rx="5" fill="#f4f4f4" stroke="#dcdcdc"/><path d="M-6 2C-9-5 0-10 6-6C10-3 6 4 0 2C-3 1-2 6 2 8" fill="none" stroke="#222" stroke-width="2.6" stroke-linecap="round"/></svg>
<svg style="left:1182.0px;top:1047.0px" width="26" height="26" viewBox="-13 -13 26 26"><circle cx="0" cy="0" r="12" fill="#5865f2"/><path d="M-7-4C-4-6 4-6 7-4C9 0 9 4 8 6C6 7 4 7 4 7L3 5C-1 6-1 6-3 5L-4 7C-4 7-6 7-8 6C-9 4-9 0-7-4Z" fill="#fff"/><circle cx="-3" cy="1" r="1.5" fill="#5865f2"/><circle cx="3" cy="1" r="1.5" fill="#5865f2"/><circle cx="6" cy="6.5" r="5.5" fill="#f23f43"/><circle cx="6" cy="6.5" r="2.8" fill="#fff"/></svg>
<svg style="left:1230.5px;top:1047.0px" width="26" height="26" viewBox="-13 -13 26 26"><rect x="-11" y="-6" width="22" height="12" rx="2" fill="#1d2a3a"/><text x="0" y="4" font-size="9.5" font-family="Liberation Sans" font-weight="bold" fill="#dfe6ee" text-anchor="middle">TS</text></svg>
<svg style="left:1599px;top:1049px" width="24" height="22"><defs><radialGradient id="sun" cx="0.35" cy="0.3" r="0.8"><stop offset="0" stop-color="#ffc12e"/><stop offset="1" stop-color="#f0562a"/></radialGradient></defs><circle cx="10.8" cy="11" r="10" fill="url(#sun)"/><circle cx="16.8" cy="5.3" r="5.5" fill="#d92b2b"/><text x="16.8" y="8.2" font-size="8" font-family="Liberation Sans" fill="#fff" text-anchor="middle">1</text></svg>
<svg style="left:1729px;top:1056px" width="13" height="8"><path d="M0.7 7L6.5 1L12.3 7" fill="none" stroke="#1a1a1a" stroke-width="1.3"/></svg>
<svg style="left:1750px;top:1053px" width="19" height="15"><path d="M0.7 4.5H3.5L7.5 1V14L3.5 10.5H0.7Z" fill="none" stroke="#1a1a1a" stroke-width="1.1"/><path d="M10 5C11 6.5 11 8.5 10 10" fill="none" stroke="#1a1a1a" stroke-width="1.1"/><path d="M12.5 3C14.5 6 14.5 9 12.5 12M15.5 1.5C18 5.5 18 9.5 15.5 13.5" fill="none" stroke="#8a8a8a" stroke-width="1"/></svg>
<svg style="left:1778px;top:1052px" width="18" height="16"><path d="M4 13L13 2C14 1 15.5 2.5 14.5 3.5L6 14Z" fill="none" stroke="#1a1a1a" stroke-width="1.1"/><path d="M4 13C1 13 1 16 3 15.5M12 6C15 5 17 7 15 9" fill="none" stroke="#1a1a1a" stroke-width="1.1"/></svg>
<svg style="left:1879px;top:1052px" width="18" height="17"><path d="M0.5 0.5H16.5V12H8L4 15.5V12H0.5Z" fill="#111"/><path d="M3 3.5H14M3 6H14M3 8.5H10" stroke="#eee" stroke-width="1"/><circle cx="13" cy="12.5" r="3" fill="#eee" stroke="#111" stroke-width="1"/></svg>
<div class="a" style="left:1915px;top:1040px;width:1px;height:40px;background:#c8c8c8;"></div>
<div class="t" style="left:7.20px;top:6.96px;font-size:9.5px;color:#31a8ff;font-weight:bold;transform:scaleX(0.9467);transform-origin:0 0;">Ps</div>
<div class="t" style="left:35.00px;top:5.84px;font-size:12px;color:#e2e2e2;transform:scaleX(0.9309);transform-origin:0 0;">File</div>
<div class="t" style="left:65.00px;top:5.84px;font-size:12px;color:#e2e2e2;transform:scaleX(0.9672);transform-origin:0 0;">Edit</div>
<div class="t" style="left:97.00px;top:5.84px;font-size:12px;color:#e2e2e2;transform:scaleX(0.9895);transform-origin:0 0;">Image</div>
<div class="t" style="left:142.00px;top:5.84px;font-size:12px;color:#e2e2e2;transform:scaleX(0.9328);transform-origin:0 0;">Layer</div>
<div class="t" style="left:182.00px;top:5.84px;font-size:12px;color:#e2e2e2;transform:scaleX(0.9610);transform-origin:0 0;">Type</div>
<div class="t" style="left:219.00px;top:5.84px;font-size:12px;color:#e2e2e2;transform:scaleX(0.9295);transform-origin:0 0;">Select</div>
<div class="t" style="left:262.00px;top:5.84px;font-size:12px;color:#e2e2e2;transform:scaleX(0.9750);transform-origin:0 0;">Filter</div>
<div class="t" style="left:300.00px;top:5.84px;font-size:12px;color:#e2e2e2;transform:scaleX(0.9778);transform-origin:0 0;">3D</div>
<div class="t" style="left:327.00px;top:5.84px;font-size:12px;color:#e2e2e2;transform:scaleX(0.9693);transform-origin:0 0;">View</div>
<div class="t" style="left:364.00px;top:5.84px;font-size:12px;color:#e2e2e2;transform:scaleX(0.9655);transform-origin:0 0;">Plugins</div>
<div class="t" style="left:414.00px;top:5.84px;font-size:12px;color:#e2e2e2;transform:scaleX(1.0309);transform-origin:0 0;">Window</div>
<div class="t" style="left:470.00px;top:5.84px;font-size:12px;color:#e2e2e2;transform:scaleX(1.0130);transform-origin:0 0;">Help</div>
<div class="t" style="left:193.00px;top:36.19px;font-size:11px;color:#dcdcdc;transform:scaleX(0.8639);transform-origin:0 0;">Resize Windows to Fit</div>
<div class="t" style="left:320.00px;top:36.19px;font-size:11px;color:#dcdcdc;transform:scaleX(0.8784);transform-origin:0 0;">Zoom All Windows</div>
<div class="t" style="left:432.00px;top:36.19px;font-size:11px;color:#dcdcdc;transform:scaleX(0.9087);transform-origin:0 0;">Scrubby Zoom</div>
<div class="t" style="left:520.00px;top:36.19px;font-size:11px;color:#dedede;transform:scaleX(0.8531);transform-origin:0 0;">100%</div>
<div class="t" style="left:579.00px;top:36.19px;font-size:11px;color:#dedede;transform:scaleX(0.8578);transform-origin:0 0;">Fit Screen</div>
<div class="t" style="left:656.00px;top:36.19px;font-size:11px;color:#dedede;transform:scaleX(0.8661);transform-origin:0 0;">Fill Screen</div>
<div class="t" style="left:51.00px;top:66.84px;font-size:12px;color:#ababab;font-weight:bold;transform:scaleX(0.9009);transform-origin:0 0;">Animation 101 Final Project.psd</div>
<div class="t" style="left:252.00px;top:66.84px;font-size:12px;color:#ababab;font-weight:bold;transform:scaleX(0.8709);transform-origin:0 0;">Pitch Bible Pose Ideas.psd</div>
<div class="t" style="left:422.00px;top:66.84px;font-size:12px;color:#f2f2f2;font-weight:bold;transform:scaleX(0.9145);transform-origin:0 0;">Scamp Growth from 10 to 20.psd @ 44.1% (Layer 2, RGB/8) *</div>
<div class="t" style="left:773.00px;top:66.84px;font-size:12px;color:#ababab;font-weight:bold;transform:scaleX(0.8703);transform-origin:0 0;">Character Sketches.psd</div>
<div class="t" style="left:928.00px;top:66.84px;font-size:12px;color:#ababab;font-weight:bold;transform:scaleX(0.8755);transform-origin:0 0;">Pitch Bible Cover.psd</div>
<div class="t" style="left:1073.00px;top:66.84px;font-size:12px;color:#ababab;font-weight:bold;transform:scaleX(0.8865);transform-origin:0 0;">Vicky Ref Sheet Concept.psd</div>
<div class="t" style="left:1256.00px;top:66.84px;font-size:12px;color:#ababab;font-weight:bold;transform:scaleX(0.8791);transform-origin:0 0;">Scamp Ref Sheet Concept.psd</div>
<div class="t" style="left:1445.00px;top:66.84px;font-size:12px;color:#ababab;font-weight:bold;transform:scaleX(0.9139);transform-origin:0 0;">Ken New Model Sheet.</div>
<div class="t" style="left:181.50px;top:91.00px;font-size:13px;color:#b4bcc4;transform:scaleX(0.87);transform-origin:0 0;">8</div>
<div class="t" style="left:336.50px;top:91.00px;font-size:13px;color:#b4bcc4;transform:scaleX(0.87);transform-origin:0 0;">9</div>
<div class="t" style="left:491.50px;top:91.00px;font-size:13px;color:#b4bcc4;transform:scaleX(0.87);transform-origin:0 0;">10</div>
<div class="t" style="left:645.50px;top:91.00px;font-size:13px;color:#b4bcc4;transform:scaleX(0.87);transform-origin:0 0;">11</div>
<div class="t" style="left:800.50px;top:91.00px;font-size:13px;color:#b4bcc4;transform:scaleX(0.87);transform-origin:0 0;">12</div>
<div class="t" style="left:954.50px;top:91.00px;font-size:13px;color:#b4bcc4;transform:scaleX(0.87);transform-origin:0 0;">13</div>
<div class="t" style="left:1109.50px;top:91.00px;font-size:13px;color:#b4bcc4;transform:scaleX(0.87);transform-origin:0 0;">14</div>
<div class="t" style="left:1263.50px;top:91.00px;font-size:13px;color:#b4bcc4;transform:scaleX(0.87);transform-origin:0 0;">15</div>
<div class="t" style="left:1418.50px;top:91.00px;font-size:13px;color:#b4bcc4;transform:scaleX(0.87);transform-origin:0 0;">16</div>
<div class="t" style="left:1572.50px;top:91.00px;font-size:13px;color:#b4bcc4;transform:scaleX(0.87);transform-origin:0 0;">17</div>
<div class="t" style="left:41.50px;top:188.00px;font-size:13px;color:#b4bcc4;transform:scaleX(0.87);transform-origin:0 0;">3</div>
<div class="t" style="left:41.50px;top:343.00px;font-size:13px;color:#b4bcc4;transform:scaleX(0.87);transform-origin:0 0;">4</div>
<div class="t" style="left:41.50px;top:498.00px;font-size:13px;color:#b4bcc4;transform:scaleX(0.87);transform-origin:0 0;">5</div>
<div class="t" style="left:41.50px;top:652.00px;font-size:13px;color:#b4bcc4;transform:scaleX(0.87);transform-origin:0 0;">6</div>
<div class="t" style="left:41.50px;top:807.00px;font-size:13px;color:#b4bcc4;transform:scaleX(0.87);transform-origin:0 0;">7</div>
<div class="t" style="left:41.50px;top:961.00px;font-size:13px;color:#b4bcc4;transform:scaleX(0.87);transform-origin:0 0;">8</div>
<div class="t" style="left:48.00px;top:1025.69px;font-size:11px;color:#e6e6e6;transform:scaleX(0.8845);transform-origin:0 0;">44.14%</div>
<div class="t" style="left:117.50px;top:1025.69px;font-size:11px;color:#d0d8e0;transform:scaleX(0.8884);transform-origin:0 0;">16.023 in x 14 in (350 ppi)</div>
<div class="t" style="left:1693.00px;top:78.84px;font-size:12px;color:#a8a8a8;font-weight:bold;transform:scaleX(0.7980);transform-origin:0 0;">Color</div>
<div class="t" style="left:1735.00px;top:78.84px;font-size:12px;color:#f0f0f0;font-weight:bold;transform:scaleX(0.8129);transform-origin:0 0;">Swatches</div>
<div class="t" style="left:1796.00px;top:78.84px;font-size:12px;color:#a8a8a8;font-weight:bold;transform:scaleX(0.8492);transform-origin:0 0;">Navigator</div>
<div class="t" style="left:1711.00px;top:113.42px;font-size:12.5px;color:#9aa2aa;transform:scaleX(0.9766);transform-origin:0 0;">Search Swatches</div>
<div class="t" style="left:1729.00px;top:174.50px;font-size:13px;color:#e8e8e8;transform:scaleX(0.7987);transform-origin:0 0;">CMYK</div>
<div class="t" style="left:1729.00px;top:203.50px;font-size:13px;color:#e8e8e8;transform:scaleX(0.9057);transform-origin:0 0;">Grayscale</div>
<div class="t" style="left:1729.00px;top:232.50px;font-size:13px;color:#e8e8e8;transform:scaleX(0.9272);transform-origin:0 0;">Pastel</div>
<div class="t" style="left:1729.00px;top:261.50px;font-size:13px;color:#e8e8e8;transform:scaleX(0.9578);transform-origin:0 0;">Light</div>
<div class="t" style="left:1729.00px;top:290.50px;font-size:13px;color:#e8e8e8;transform:scaleX(0.8740);transform-origin:0 0;">Pure</div>
<div class="t" style="left:1693.00px;top:348.84px;font-size:12px;color:#f0f0f0;font-weight:bold;transform:scaleX(0.7706);transform-origin:0 0;">Brushes</div>
<div class="t" style="left:1690.00px;top:382.27px;font-size:11.5px;color:#8c8c8c;transform:scaleX(0.8214);transform-origin:0 0;">Size:</div>
<div class="t" style="left:1709.00px;top:428.77px;font-size:11.5px;color:#9aa2aa;transform:scaleX(0.9778);transform-origin:0 0;">Search Brushes</div>
<div class="t" style="left:1693.60px;top:468.69px;font-size:11px;color:#e6e6e6;transform:scaleX(1.0135);transform-origin:0 0;">17</div>
<div class="t" style="left:1757.60px;top:468.69px;font-size:11px;color:#e6e6e6;transform:scaleX(1.0135);transform-origin:0 0;">26</div>
<div class="t" style="left:1789.60px;top:468.69px;font-size:11px;color:#e6e6e6;transform:scaleX(1.0135);transform-origin:0 0;">19</div>
<div class="t" style="left:1824.80px;top:468.69px;font-size:11px;color:#e6e6e6;transform:scaleX(1.0135);transform-origin:0 0;">6</div>
<div class="t" style="left:1856.80px;top:468.69px;font-size:11px;color:#e6e6e6;transform:scaleX(1.0135);transform-origin:0 0;">5</div>
<div class="t" style="left:1691.00px;top:491.27px;font-size:11.5px;color:#eaeaea;transform:scaleX(0.8761);transform-origin:0 0;">Sketch Brush No.3</div>
<div class="t" style="left:1691.00px;top:539.77px;font-size:11.5px;color:#eaeaea;transform:scaleX(0.8601);transform-origin:0 0;">Comic Brush No. 4</div>
<div class="t" style="left:1691.00px;top:589.77px;font-size:11.5px;color:#eaeaea;transform:scaleX(0.8601);transform-origin:0 0;">Comic Brush No. 5</div>
<div class="t" style="left:1693.00px;top:644.84px;font-size:12px;color:#f0f0f0;font-weight:bold;transform:scaleX(0.7753);transform-origin:0 0;">Layers</div>
<div class="t" style="left:1740.00px;top:644.84px;font-size:12px;color:#a8a8a8;font-weight:bold;transform:scaleX(0.7776);transform-origin:0 0;">Channels</div>
<div class="t" style="left:1800.00px;top:644.84px;font-size:12px;color:#a8a8a8;font-weight:bold;transform:scaleX(0.7344);transform-origin:0 0;">Paths</div>
<div class="t" style="left:1710.00px;top:680.27px;font-size:11.5px;color:#e6e6e6;transform:scaleX(0.9124);transform-origin:0 0;">Kind</div>
<div class="t" style="left:1696.00px;top:708.27px;font-size:11.5px;color:#e6e6e6;transform:scaleX(0.7555);transform-origin:0 0;">Normal</div>
<div class="t" style="left:1823.00px;top:708.27px;font-size:11.5px;color:#d8d8d8;transform:scaleX(0.8535);transform-origin:0 0;">Opacity:</div>
<div class="t" style="left:1869.00px;top:708.69px;font-size:11px;color:#e6e6e6;transform:scaleX(0.8531);transform-origin:0 0;">100%</div>
<div class="t" style="left:1690.00px;top:736.27px;font-size:11.5px;color:#d8d8d8;transform:scaleX(0.8368);transform-origin:0 0;">Lock:</div>
<div class="t" style="left:1845.00px;top:736.27px;font-size:11.5px;color:#d8d8d8;transform:scaleX(0.8387);transform-origin:0 0;">Fill:</div>
<div class="t" style="left:1869.00px;top:736.69px;font-size:11px;color:#e6e6e6;transform:scaleX(0.8531);transform-origin:0 0;">100%</div>
<div class="t" style="left:1759.00px;top:771.27px;font-size:11.5px;color:#f0f0f0;transform:scaleX(0.8603);transform-origin:0 0;">Layer 2</div>
<div class="t" style="left:1759.00px;top:809.27px;font-size:11.5px;color:#eaeaea;transform:scaleX(0.8570);transform-origin:0 0;">Scamp 18+ Sketch</div>
<div class="t" style="left:1877.00px;top:808.11px;font-size:13px;color:#e0e0e0;font-family:"Liberation Serif";transform:scaleX(1.2005);transform-origin:0 0;font-style:italic;">fx</div>
<div class="t" style="left:1752.00px;top:835.69px;font-size:11px;color:#eaeaea;transform:scaleX(0.8976);transform-origin:0 0;">Effects</div>
<div class="t" style="left:1769.00px;top:854.69px;font-size:11px;color:#eaeaea;transform:scaleX(0.8626);transform-origin:0 0;">Color Overlay</div>
<div class="t" style="left:1759.00px;top:885.27px;font-size:11.5px;color:#eaeaea;transform:scaleX(0.8432);transform-origin:0 0;">Scamp 16 Sketch</div>
<div class="t" style="left:1759.00px;top:923.27px;font-size:11.5px;color:#eaeaea;transform:scaleX(0.8432);transform-origin:0 0;">Scamp 14 Sketch</div>
<div class="t" style="left:1759.00px;top:961.27px;font-size:11.5px;color:#eaeaea;transform:scaleX(0.8432);transform-origin:0 0;">Scamp 12 Sketch</div>
<div class="t" style="left:1759.00px;top:999.27px;font-size:11.5px;color:#eaeaea;transform:scaleX(0.8432);transform-origin:0 0;">Scamp 10 Sketch</div>
<div class="t" style="left:1745.00px;top:1021.11px;font-size:13px;color:#d8d8d8;font-family:"Liberation Serif";transform:scaleX(1.1081);transform-origin:0 0;font-style:italic;">fx</div>
<div class="t" style="left:88.00px;top:1053.73px;font-size:14.5px;color:#1e1e1e;transform:scaleX(0.9988);transform-origin:0 0;">Type here to search</div>
<div class="t" style="left:1630.50px;top:1053.15px;font-size:14px;color:#1a1a1a;transform:scaleX(0.8916);transform-origin:0 0;">56°F</div>
<div class="t" style="left:1666.50px;top:1053.15px;font-size:14px;color:#1a1a1a;transform:scaleX(0.9321);transform-origin:0 0;">Sunny</div>
<div class="t" style="left:1813.50px;top:1044.00px;font-size:13px;color:#1a1a1a;transform:scaleX(0.8675);transform-origin:0 0;">4:37 PM</div>
<div class="t" style="left:1807.00px;top:1061.50px;font-size:13px;color:#1a1a1a;transform:scaleX(0.8815);transform-origin:0 0;">11/26/2024</div>
</body></html>
